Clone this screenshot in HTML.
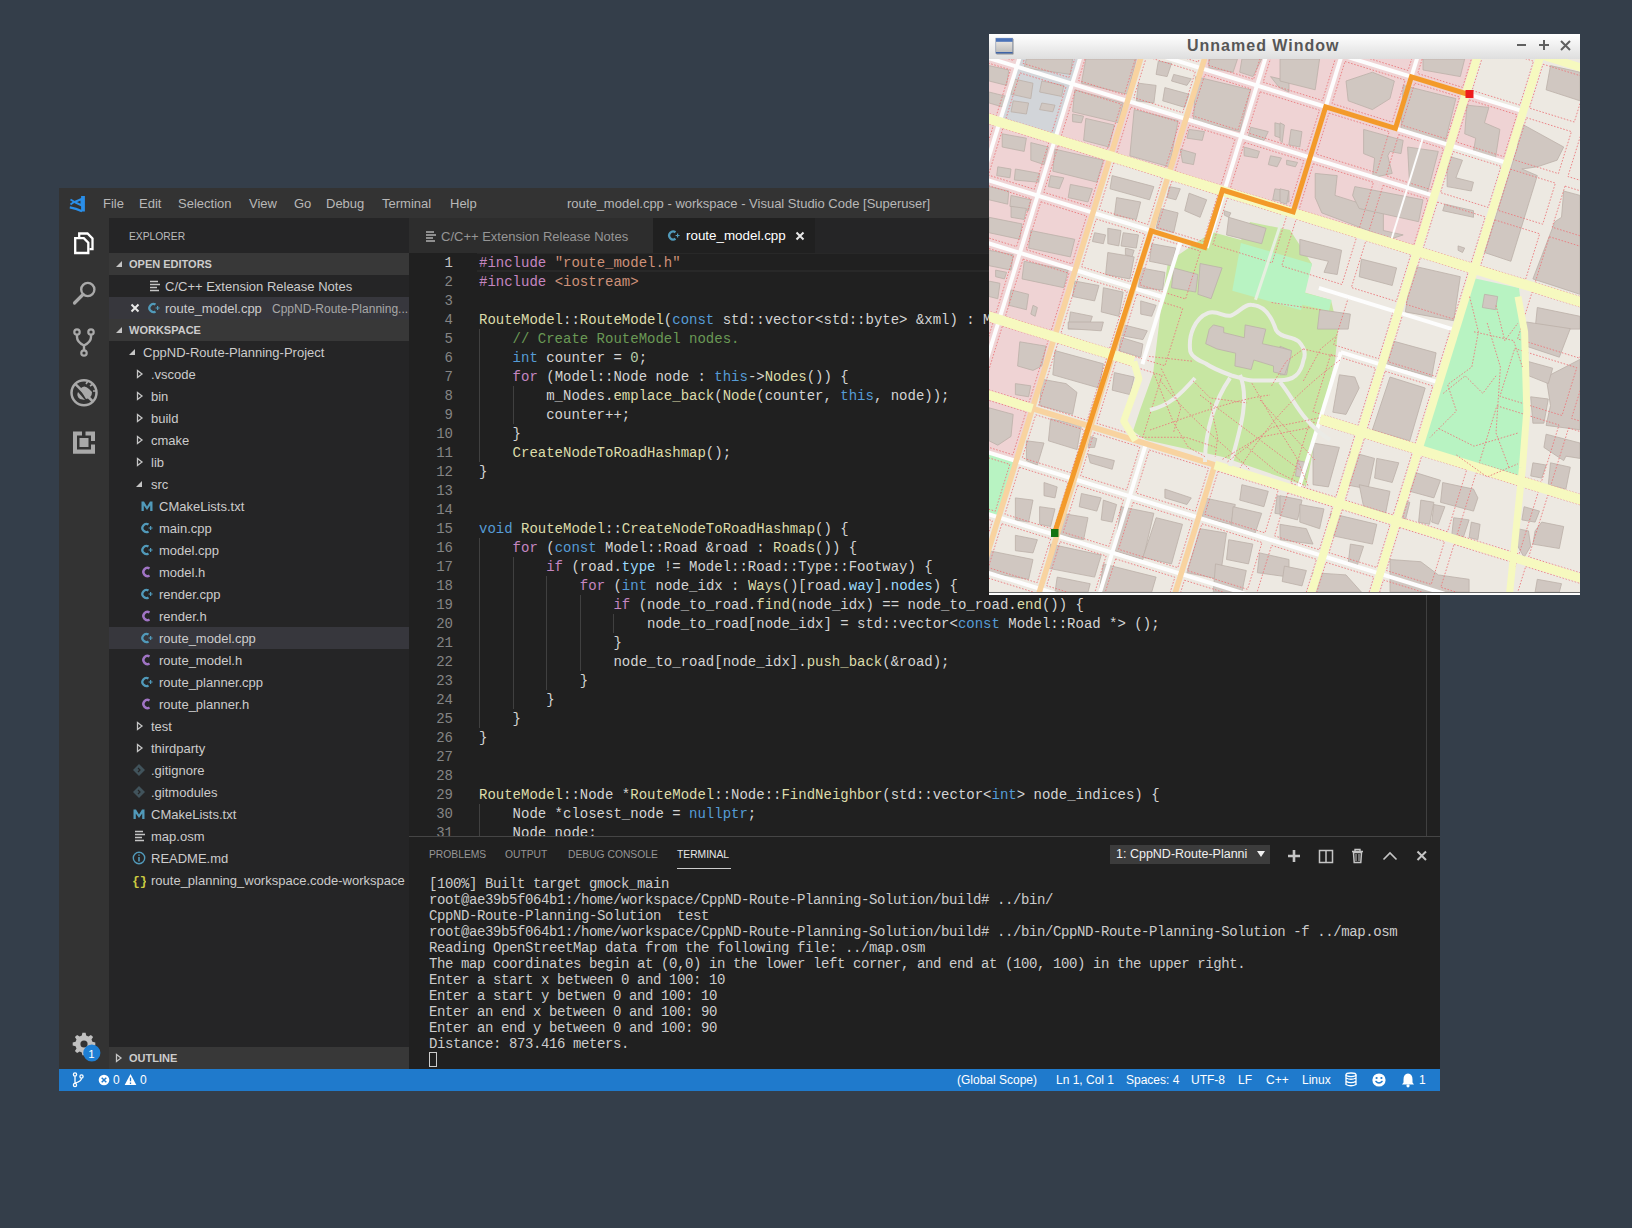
<!DOCTYPE html>
<html><head><meta charset="utf-8">
<style>
*{margin:0;padding:0;box-sizing:border-box}
html,body{width:1632px;height:1228px;overflow:hidden;background:#343e4a;font-family:"Liberation Sans",sans-serif}
.a{position:absolute}
i.ic{font-style:normal;line-height:0}
b{font-weight:normal}
#win{left:59px;top:188px;width:1381px;height:903px;background:#202020;overflow:hidden}
#title{left:0;top:0;width:1381px;height:30px;background:#333333;color:#b8b8b8;font-size:13px}
#title span{position:absolute;top:8px;white-space:pre}
#act{left:0;top:30px;width:50px;height:851px;background:#333333}
#side{left:50px;top:30px;width:300px;height:851px;background:#252526;color:#cccccc;font-size:13px}
.row{position:absolute;left:0;width:300px;height:22px;white-space:pre}
.row span{position:absolute;top:4px}
.hdr{background:#383838;font-weight:bold;font-size:11px;color:#cccccc}
.hdr span{top:5px}
#editor{left:350px;top:30px;width:1031px;height:618px;background:#202020}
#tabs{left:0;top:0;width:1031px;height:35px;background:#252526}
#code{left:0;top:35px;width:1031px;height:583px;overflow:hidden;font-family:"Liberation Mono",monospace;font-size:14px;color:#d4d4d4}
.ln{position:absolute;left:0;width:44px;text-align:right;color:#858585;height:19px;line-height:19px}
.cl{position:absolute;left:70px;height:19px;line-height:19px;white-space:pre}
.g{position:absolute;width:1px;background:#404040}
.k{color:#c586c0}.t{color:#569cd6}.f{color:#dcdcaa}.s{color:#ce9178}.c{color:#6a9955}.m{color:#9cdcfe}.n{color:#b5cea8}
#panel{left:350px;top:648px;width:1031px;height:233px;background:#202020;border-top:1px solid #454545}
#term{left:20px;top:39px;font-family:"Liberation Mono",monospace;font-size:14px;letter-spacing:-0.4px;color:#cccccc;line-height:16px;white-space:pre}
#status{left:0;top:881px;width:1381px;height:22px;background:#1f7acc;color:#ffffff;font-size:12px}
#status span{position:absolute;top:4px;white-space:pre}
#map{left:989px;top:34px;width:591px;height:561px;background:#ede9e2;overflow:hidden}
.ptab{top:12px;font-size:10.3px;color:#969696;white-space:pre}

</style></head><body>
<div id="win" class="a">
  <div id="title" class="a">
    <svg class="a" style="left:0;top:0" width="40" height="30" viewBox="59 188 40 30"><g fill="none" stroke="#2a8ee8"><path d="M83 196 V211.5" stroke-width="3.8"/><path d="M81.5 199 L74.5 202 L81.5 205.5 Z" stroke-width="2"/><path d="M70.5 199.5 L75 202.3 M70.5 204.5 L74 202" stroke-width="1.8"/><path d="M69.8 207.3 Q76 208.3 82 211.3" stroke-width="2.2"/></g></svg>
    <span style="left:44px">File</span>
    <span style="left:80px">Edit</span>
    <span style="left:119px">Selection</span>
    <span style="left:190px">View</span>
    <span style="left:235px">Go</span>
    <span style="left:267px">Debug</span>
    <span style="left:323px">Terminal</span>
    <span style="left:391px">Help</span>
    <span style="left:508px">route_model.cpp - workspace - Visual Studio Code [Superuser]</span>
  </div>
  <div id="act" class="a">
    <svg class="a" style="left:0;top:0" width="50" height="851" viewBox="59 218 50 851">
      <g fill="none" stroke="#ffffff" stroke-width="2.3" stroke-linejoin="miter">
        <path d="M75.2 238.2 H83.8 L88.3 242.7 V253 H75.2 Z"/>
        <path d="M79.2 237 V233.5 H87.5 L92.5 238.5 V249.2 H89.5"/>
      </g>
      <g fill="none" stroke="#a9a9a9">
        <circle cx="87.8" cy="289.5" r="6.6" stroke-width="2.4"/>
        <path d="M83 294.5 L74.5 303" stroke-width="3.2" stroke-linecap="round"/>
        <circle cx="77" cy="332" r="2.7" stroke-width="2.2"/>
        <circle cx="91" cy="332" r="2.7" stroke-width="2.2"/>
        <circle cx="84" cy="353" r="2.7" stroke-width="2.2"/>
        <path d="M77 334.8 V337 Q77 342 84 345.5 Q91 342 91 337 V334.8 M84 345.5 V350.3" stroke-width="2.4"/>
        <circle cx="84" cy="392.7" r="12.5" stroke-width="2.5"/>
        <path d="M75.2 383.9 L92.8 401.5" stroke-width="2.5"/>
      </g>
      <g fill="#a9a9a9">
        <path d="M80 389 Q84 384 89 389 L92 392 Q92 398 86 399 Z"/>
        <path d="M86 384 l2 -3 M90 386 l3 -2 M93 391 h3" stroke="#a9a9a9" stroke-width="1.6"/>
        <path d="M78 392 Q76 396 80 399 L85 400 Z"/>
        <path d="M73 431.5 H82 V435.5 H77 V449.5 H91 V444.5 H95 V453.8 H73 Z"/>
        <path d="M85.5 431.5 H95 V441 H91 V435.5 H85.5 Z"/>
        <rect x="79.5" y="438" width="9" height="9"/>
      </g>
      <g transform="translate(84 1044)">
        <path fill="#c0c0c0" d="M-1.6 -9.5 H1.6 L2.2 -6.6 L4.4 -5.7 L6.9 -7.3 L9.1 -5.1 L7.5 -2.6 L8.4 -0.4 L11.3 0.2 V3.4 L8.4 4 L7.5 6.2 L9.1 8.7 L6.9 10.9 L4.4 9.3 L2.2 10.2 L1.6 13.1 H-1.6 L-2.2 10.2 L-4.4 9.3 L-6.9 10.9 L-9.1 8.7 L-7.5 6.2 L-8.4 4 L-11.3 3.4 V0.2 L-8.4 -0.4 L-7.5 -2.6 L-9.1 -5.1 L-6.9 -7.3 L-4.4 -5.7 L-2.2 -6.6 Z" transform="translate(0 -1.8)"/>
        <circle cx="0" cy="0" r="3.6" fill="#333333"/>
      </g>
      <circle cx="91.8" cy="1053" r="8.6" fill="#1e7fd4"/>
      <text x="91.5" y="1057.5" font-family="Liberation Sans" font-size="11.5" fill="#fff" text-anchor="middle">1</text>
    </svg>
  </div>
  <div id="side" class="a">
<div class="a" style="left:20px;top:13px;font-size:10.3px;color:#bbbbbb">EXPLORER</div>
<div class="row hdr" style="top:35px"><i class="a ic" style="left:6px;top:0"><svg width="8" height="22" viewBox="0 0 8 22"><path d="M7 8 V14 H1 Z" fill="#c5c5c5"/></svg></i><span style="left:20px">OPEN EDITORS</span></div>
<div class="row" style="top:57px;"><i class="a ic" style="left:39px;top:0"><svg width="14" height="22" viewBox="0 0 14 22"><path d="M2 6.5 h8 M2 9.5 h10 M2 12.5 h7 M2 15.5 h9" stroke="#c5c5c5" stroke-width="1.3"/></svg></i><span style="left:56px;color:#cccccc">C/C++ Extension Release Notes</span></div>
<div class="row" style="top:79px;background:#37373d;"><i class="a ic" style="left:38px;top:0"><svg width="14" height="22" viewBox="0 0 14 22"><path d="M8.5 7.6 A4 4 0 1 0 8.5 14.4" fill="none" stroke="#519aba" stroke-width="2.3"/><path d="M8.6 11 h4 M10.6 9 v4" stroke="#519aba" stroke-width="1.2"/></svg></i><span style="left:56px;color:#cccccc">route_model.cpp</span><span style="left:163px;top:5px;font-size:12px;color:#a8a8a8">CppND-Route-Planning...</span><i class="a ic" style="left:21px;top:0"><svg width="10" height="22" viewBox="0 0 10 22"><path d="M1.5 7.5 L8.5 14.5 M8.5 7.5 L1.5 14.5" stroke="#e8e8e8" stroke-width="2"/></svg></i></div>
<div class="row hdr" style="top:101px"><i class="a ic" style="left:6px;top:0"><svg width="8" height="22" viewBox="0 0 8 22"><path d="M7 8 V14 H1 Z" fill="#c5c5c5"/></svg></i><span style="left:20px">WORKSPACE</span></div>
<div class="row" style="top:123px;"><i class="a ic" style="left:19px;top:0"><svg width="8" height="22" viewBox="0 0 8 22"><path d="M7 8 V14 H1 Z" fill="#c5c5c5"/></svg></i><span style="left:34px;color:#cccccc">CppND-Route-Planning-Project</span></div>
<div class="row" style="top:145px;"><i class="a ic" style="left:27px;top:0"><svg width="8" height="22" viewBox="0 0 8 22"><path d="M1.5 7.5 L6 11 L1.5 14.5 Z" fill="none" stroke="#c5c5c5" stroke-width="1.3"/></svg></i><span style="left:42px;color:#cccccc">.vscode</span></div>
<div class="row" style="top:167px;"><i class="a ic" style="left:27px;top:0"><svg width="8" height="22" viewBox="0 0 8 22"><path d="M1.5 7.5 L6 11 L1.5 14.5 Z" fill="none" stroke="#c5c5c5" stroke-width="1.3"/></svg></i><span style="left:42px;color:#cccccc">bin</span></div>
<div class="row" style="top:189px;"><i class="a ic" style="left:27px;top:0"><svg width="8" height="22" viewBox="0 0 8 22"><path d="M1.5 7.5 L6 11 L1.5 14.5 Z" fill="none" stroke="#c5c5c5" stroke-width="1.3"/></svg></i><span style="left:42px;color:#cccccc">build</span></div>
<div class="row" style="top:211px;"><i class="a ic" style="left:27px;top:0"><svg width="8" height="22" viewBox="0 0 8 22"><path d="M1.5 7.5 L6 11 L1.5 14.5 Z" fill="none" stroke="#c5c5c5" stroke-width="1.3"/></svg></i><span style="left:42px;color:#cccccc">cmake</span></div>
<div class="row" style="top:233px;"><i class="a ic" style="left:27px;top:0"><svg width="8" height="22" viewBox="0 0 8 22"><path d="M1.5 7.5 L6 11 L1.5 14.5 Z" fill="none" stroke="#c5c5c5" stroke-width="1.3"/></svg></i><span style="left:42px;color:#cccccc">lib</span></div>
<div class="row" style="top:255px;"><i class="a ic" style="left:26px;top:0"><svg width="8" height="22" viewBox="0 0 8 22"><path d="M7 8 V14 H1 Z" fill="#c5c5c5"/></svg></i><span style="left:42px;color:#cccccc">src</span></div>
<div class="row" style="top:277px;"><i class="a ic" style="left:31px;top:0"><svg width="14" height="22" viewBox="0 0 14 22"><path d="M1.5 16 V6.5 H4 L7 11.5 L10 6.5 H12.5 V16 H10.2 V10.5 L7 15 L3.8 10.5 V16 Z" fill="#519aba"/></svg></i><span style="left:50px;color:#cccccc">CMakeLists.txt</span></div>
<div class="row" style="top:299px;"><i class="a ic" style="left:31px;top:0"><svg width="14" height="22" viewBox="0 0 14 22"><path d="M8.5 7.6 A4 4 0 1 0 8.5 14.4" fill="none" stroke="#519aba" stroke-width="2.3"/><path d="M8.6 11 h4 M10.6 9 v4" stroke="#519aba" stroke-width="1.2"/></svg></i><span style="left:50px;color:#cccccc">main.cpp</span></div>
<div class="row" style="top:321px;"><i class="a ic" style="left:31px;top:0"><svg width="14" height="22" viewBox="0 0 14 22"><path d="M8.5 7.6 A4 4 0 1 0 8.5 14.4" fill="none" stroke="#519aba" stroke-width="2.3"/><path d="M8.6 11 h4 M10.6 9 v4" stroke="#519aba" stroke-width="1.2"/></svg></i><span style="left:50px;color:#cccccc">model.cpp</span></div>
<div class="row" style="top:343px;"><i class="a ic" style="left:31px;top:0"><svg width="14" height="22" viewBox="0 0 14 22"><path d="M9.5 7.6 A4 4 0 1 0 9.5 14.4" fill="none" stroke="#a074c4" stroke-width="2.4"/></svg></i><span style="left:50px;color:#cccccc">model.h</span></div>
<div class="row" style="top:365px;"><i class="a ic" style="left:31px;top:0"><svg width="14" height="22" viewBox="0 0 14 22"><path d="M8.5 7.6 A4 4 0 1 0 8.5 14.4" fill="none" stroke="#519aba" stroke-width="2.3"/><path d="M8.6 11 h4 M10.6 9 v4" stroke="#519aba" stroke-width="1.2"/></svg></i><span style="left:50px;color:#cccccc">render.cpp</span></div>
<div class="row" style="top:387px;"><i class="a ic" style="left:31px;top:0"><svg width="14" height="22" viewBox="0 0 14 22"><path d="M9.5 7.6 A4 4 0 1 0 9.5 14.4" fill="none" stroke="#a074c4" stroke-width="2.4"/></svg></i><span style="left:50px;color:#cccccc">render.h</span></div>
<div class="row" style="top:409px;background:#37373d;"><i class="a ic" style="left:31px;top:0"><svg width="14" height="22" viewBox="0 0 14 22"><path d="M8.5 7.6 A4 4 0 1 0 8.5 14.4" fill="none" stroke="#519aba" stroke-width="2.3"/><path d="M8.6 11 h4 M10.6 9 v4" stroke="#519aba" stroke-width="1.2"/></svg></i><span style="left:50px;color:#cccccc">route_model.cpp</span></div>
<div class="row" style="top:431px;"><i class="a ic" style="left:31px;top:0"><svg width="14" height="22" viewBox="0 0 14 22"><path d="M9.5 7.6 A4 4 0 1 0 9.5 14.4" fill="none" stroke="#a074c4" stroke-width="2.4"/></svg></i><span style="left:50px;color:#cccccc">route_model.h</span></div>
<div class="row" style="top:453px;"><i class="a ic" style="left:31px;top:0"><svg width="14" height="22" viewBox="0 0 14 22"><path d="M8.5 7.6 A4 4 0 1 0 8.5 14.4" fill="none" stroke="#519aba" stroke-width="2.3"/><path d="M8.6 11 h4 M10.6 9 v4" stroke="#519aba" stroke-width="1.2"/></svg></i><span style="left:50px;color:#cccccc">route_planner.cpp</span></div>
<div class="row" style="top:475px;"><i class="a ic" style="left:31px;top:0"><svg width="14" height="22" viewBox="0 0 14 22"><path d="M9.5 7.6 A4 4 0 1 0 9.5 14.4" fill="none" stroke="#a074c4" stroke-width="2.4"/></svg></i><span style="left:50px;color:#cccccc">route_planner.h</span></div>
<div class="row" style="top:497px;"><i class="a ic" style="left:27px;top:0"><svg width="8" height="22" viewBox="0 0 8 22"><path d="M1.5 7.5 L6 11 L1.5 14.5 Z" fill="none" stroke="#c5c5c5" stroke-width="1.3"/></svg></i><span style="left:42px;color:#cccccc">test</span></div>
<div class="row" style="top:519px;"><i class="a ic" style="left:27px;top:0"><svg width="8" height="22" viewBox="0 0 8 22"><path d="M1.5 7.5 L6 11 L1.5 14.5 Z" fill="none" stroke="#c5c5c5" stroke-width="1.3"/></svg></i><span style="left:42px;color:#cccccc">thirdparty</span></div>
<div class="row" style="top:541px;"><i class="a ic" style="left:23px;top:0"><svg width="14" height="22" viewBox="0 0 14 22"><path d="M7 5 L13 11 L7 17 L1 11 Z" fill="#41535b"/><path d="M6 9 L8 11 L6 13" stroke="#252526" stroke-width="1.2" fill="none"/></svg></i><span style="left:42px;color:#cccccc">.gitignore</span></div>
<div class="row" style="top:563px;"><i class="a ic" style="left:23px;top:0"><svg width="14" height="22" viewBox="0 0 14 22"><path d="M7 5 L13 11 L7 17 L1 11 Z" fill="#41535b"/><path d="M6 9 L8 11 L6 13" stroke="#252526" stroke-width="1.2" fill="none"/></svg></i><span style="left:42px;color:#cccccc">.gitmodules</span></div>
<div class="row" style="top:585px;"><i class="a ic" style="left:23px;top:0"><svg width="14" height="22" viewBox="0 0 14 22"><path d="M1.5 16 V6.5 H4 L7 11.5 L10 6.5 H12.5 V16 H10.2 V10.5 L7 15 L3.8 10.5 V16 Z" fill="#519aba"/></svg></i><span style="left:42px;color:#cccccc">CMakeLists.txt</span></div>
<div class="row" style="top:607px;"><i class="a ic" style="left:24px;top:0"><svg width="14" height="22" viewBox="0 0 14 22"><path d="M2 6.5 h8 M2 9.5 h10 M2 12.5 h7 M2 15.5 h9" stroke="#c5c5c5" stroke-width="1.3"/></svg></i><span style="left:42px;color:#cccccc">map.osm</span></div>
<div class="row" style="top:629px;"><i class="a ic" style="left:23px;top:0"><svg width="14" height="22" viewBox="0 0 14 22"><circle cx="7" cy="11" r="5.7" fill="none" stroke="#519aba" stroke-width="1.4"/><path d="M7 10 v4.5 M7 7.5 v1.2" stroke="#519aba" stroke-width="1.6"/></svg></i><span style="left:42px;color:#cccccc">README.md</span></div>
<div class="row" style="top:651px;"><i class="a ic" style="left:23px;top:0"><svg width="14" height="22" viewBox="0 0 14 22"><text x="0" y="16" font-family="Liberation Mono" font-size="13" font-weight="bold" fill="#cbcb41">{}</text></svg></i><span style="left:42px;color:#cccccc">route_planning_workspace.code-workspace</span></div>
<div class="row hdr" style="top:829px"><i class="a ic" style="left:6px;top:0"><svg width="8" height="22" viewBox="0 0 8 22"><path d="M1.5 7.5 L6 11 L1.5 14.5 Z" fill="none" stroke="#c5c5c5" stroke-width="1.3"/></svg></i><span style="left:20px">OUTLINE</span></div>
  </div>
  <div id="editor" class="a">
    <div id="tabs" class="a">
      <div class="a" style="left:0;top:0;width:244px;height:35px;background:#2d2d2d"></div>
      <svg class="a" style="left:15px;top:1px" width="14" height="35" viewBox="0 0 14 35"><path d="M2 13 h8 M2 16 h10 M2 19 h7 M2 22 h9" stroke="#b0b0b0" stroke-width="1.3"/></svg>
      <span class="a" style="left:32px;top:11px;font-size:13px;color:#969696;white-space:pre">C/C++ Extension Release Notes</span>
      <div class="a" style="left:244px;top:0;width:162px;height:35px;background:#202020"></div>
      <svg class="a" style="left:258px;top:0" width="14" height="35" viewBox="0 0 14 35"><path d="M8.5 14.2 A4 4 0 1 0 8.5 20.8" fill="none" stroke="#519aba" stroke-width="2.3"/><path d="M8.6 17.5 h4 M10.6 15.5 v4" stroke="#519aba" stroke-width="1.2"/></svg>
      <span class="a" style="left:277px;top:10px;font-size:13.4px;color:#ffffff;white-space:pre">route_model.cpp</span>
      <svg class="a" style="left:386px;top:13px" width="10" height="10" viewBox="0 0 10 10"><path d="M1.5 1.5 L8.5 8.5 M8.5 1.5 L1.5 8.5" stroke="#e8e8e8" stroke-width="2"/></svg>
    </div>
    <div class="a" style="left:1017px;top:35px;width:1px;height:583px;background:#404040"></div>
    <div id="code" class="a">
<div class="a" style="left:68px;top:0;width:950px;height:19px;border-top:1px solid #282828;border-bottom:2px solid #282828"></div>
<div class="ln" style="top:1px;color:#c6c6c6">1</div>
<div class="cl" style="top:1px"><b class="k">#include</b> <b class="s">"route_model.h"</b></div>
<div class="ln" style="top:20px;color:#858585">2</div>
<div class="cl" style="top:20px"><b class="k">#include</b> <b class="s">&lt;iostream&gt;</b></div>
<div class="ln" style="top:39px;color:#858585">3</div>
<div class="cl" style="top:39px"></div>
<div class="ln" style="top:58px;color:#858585">4</div>
<div class="cl" style="top:58px"><b class="f">RouteModel</b>::<b class="f">RouteModel</b>(<b class="t">const</b> std::vector&lt;std::byte&gt; &amp;xml) : Model(xml) {</div>
<div class="ln" style="top:77px;color:#858585">5</div>
<div class="cl" style="top:77px">    <b class="c">// Create RouteModel nodes.</b></div>
<div class="ln" style="top:96px;color:#858585">6</div>
<div class="cl" style="top:96px">    <b class="t">int</b> counter = <b class="n">0</b>;</div>
<div class="ln" style="top:115px;color:#858585">7</div>
<div class="cl" style="top:115px">    <b class="k">for</b> (Model::Node node : <b class="t">this</b>-&gt;<b class="f">Nodes</b>()) {</div>
<div class="ln" style="top:134px;color:#858585">8</div>
<div class="cl" style="top:134px">        m_Nodes.<b class="f">emplace_back</b>(<b class="f">Node</b>(counter, <b class="t">this</b>, node));</div>
<div class="ln" style="top:153px;color:#858585">9</div>
<div class="cl" style="top:153px">        counter++;</div>
<div class="ln" style="top:172px;color:#858585">10</div>
<div class="cl" style="top:172px">    }</div>
<div class="ln" style="top:191px;color:#858585">11</div>
<div class="cl" style="top:191px">    <b class="f">CreateNodeToRoadHashmap</b>();</div>
<div class="ln" style="top:210px;color:#858585">12</div>
<div class="cl" style="top:210px">}</div>
<div class="ln" style="top:229px;color:#858585">13</div>
<div class="cl" style="top:229px"></div>
<div class="ln" style="top:248px;color:#858585">14</div>
<div class="cl" style="top:248px"></div>
<div class="ln" style="top:267px;color:#858585">15</div>
<div class="cl" style="top:267px"><b class="t">void</b> <b class="f">RouteModel</b>::<b class="f">CreateNodeToRoadHashmap</b>() {</div>
<div class="ln" style="top:286px;color:#858585">16</div>
<div class="cl" style="top:286px">    <b class="k">for</b> (<b class="t">const</b> Model::Road &amp;road : <b class="f">Roads</b>()) {</div>
<div class="ln" style="top:305px;color:#858585">17</div>
<div class="cl" style="top:305px">        <b class="k">if</b> (road.<b class="m">type</b> != Model::Road::Type::Footway) {</div>
<div class="ln" style="top:324px;color:#858585">18</div>
<div class="cl" style="top:324px">            <b class="k">for</b> (<b class="t">int</b> node_idx : <b class="f">Ways</b>()[road.<b class="m">way</b>].<b class="m">nodes</b>) {</div>
<div class="ln" style="top:343px;color:#858585">19</div>
<div class="cl" style="top:343px">                <b class="k">if</b> (node_to_road.<b class="f">find</b>(node_idx) == node_to_road.<b class="f">end</b>()) {</div>
<div class="ln" style="top:362px;color:#858585">20</div>
<div class="cl" style="top:362px">                    node_to_road[node_idx] = std::vector&lt;<b class="t">const</b> Model::Road *&gt; ();</div>
<div class="ln" style="top:381px;color:#858585">21</div>
<div class="cl" style="top:381px">                }</div>
<div class="ln" style="top:400px;color:#858585">22</div>
<div class="cl" style="top:400px">                node_to_road[node_idx].<b class="f">push_back</b>(&amp;road);</div>
<div class="ln" style="top:419px;color:#858585">23</div>
<div class="cl" style="top:419px">            }</div>
<div class="ln" style="top:438px;color:#858585">24</div>
<div class="cl" style="top:438px">        }</div>
<div class="ln" style="top:457px;color:#858585">25</div>
<div class="cl" style="top:457px">    }</div>
<div class="ln" style="top:476px;color:#858585">26</div>
<div class="cl" style="top:476px">}</div>
<div class="ln" style="top:495px;color:#858585">27</div>
<div class="cl" style="top:495px"></div>
<div class="ln" style="top:514px;color:#858585">28</div>
<div class="cl" style="top:514px"></div>
<div class="ln" style="top:533px;color:#858585">29</div>
<div class="cl" style="top:533px"><b class="f">RouteModel</b>::Node *<b class="f">RouteModel</b>::Node::<b class="f">FindNeighbor</b>(std::vector&lt;<b class="t">int</b>&gt; node_indices) {</div>
<div class="ln" style="top:552px;color:#858585">30</div>
<div class="cl" style="top:552px">    Node *closest_node = <b class="t">nullptr</b>;</div>
<div class="ln" style="top:571px;color:#858585">31</div>
<div class="cl" style="top:571px">    Node node;</div>
<div class="g" style="left:70px;top:76px;height:19px"></div>
<div class="g" style="left:70px;top:95px;height:19px"></div>
<div class="g" style="left:70px;top:114px;height:19px"></div>
<div class="g" style="left:70px;top:133px;height:19px"></div>
<div class="g" style="left:104px;top:133px;height:19px"></div>
<div class="g" style="left:70px;top:152px;height:19px"></div>
<div class="g" style="left:104px;top:152px;height:19px"></div>
<div class="g" style="left:70px;top:171px;height:19px"></div>
<div class="g" style="left:70px;top:190px;height:19px"></div>
<div class="g" style="left:70px;top:285px;height:19px"></div>
<div class="g" style="left:70px;top:304px;height:19px"></div>
<div class="g" style="left:104px;top:304px;height:19px"></div>
<div class="g" style="left:70px;top:323px;height:19px"></div>
<div class="g" style="left:104px;top:323px;height:19px"></div>
<div class="g" style="left:137px;top:323px;height:19px"></div>
<div class="g" style="left:70px;top:342px;height:19px"></div>
<div class="g" style="left:104px;top:342px;height:19px"></div>
<div class="g" style="left:137px;top:342px;height:19px"></div>
<div class="g" style="left:171px;top:342px;height:19px"></div>
<div class="g" style="left:70px;top:361px;height:19px"></div>
<div class="g" style="left:104px;top:361px;height:19px"></div>
<div class="g" style="left:137px;top:361px;height:19px"></div>
<div class="g" style="left:171px;top:361px;height:19px"></div>
<div class="g" style="left:204px;top:361px;height:19px"></div>
<div class="g" style="left:70px;top:380px;height:19px"></div>
<div class="g" style="left:104px;top:380px;height:19px"></div>
<div class="g" style="left:137px;top:380px;height:19px"></div>
<div class="g" style="left:171px;top:380px;height:19px"></div>
<div class="g" style="left:70px;top:399px;height:19px"></div>
<div class="g" style="left:104px;top:399px;height:19px"></div>
<div class="g" style="left:137px;top:399px;height:19px"></div>
<div class="g" style="left:171px;top:399px;height:19px"></div>
<div class="g" style="left:70px;top:418px;height:19px"></div>
<div class="g" style="left:104px;top:418px;height:19px"></div>
<div class="g" style="left:137px;top:418px;height:19px"></div>
<div class="g" style="left:70px;top:437px;height:19px"></div>
<div class="g" style="left:104px;top:437px;height:19px"></div>
<div class="g" style="left:70px;top:456px;height:19px"></div>
<div class="g" style="left:70px;top:551px;height:19px"></div>
<div class="g" style="left:70px;top:570px;height:19px"></div>
    </div>
  </div>
  <div id="panel" class="a">
    <span class="a ptab" style="left:20px">PROBLEMS</span>
    <span class="a ptab" style="left:96px">OUTPUT</span>
    <span class="a ptab" style="left:159px">DEBUG CONSOLE</span>
    <span class="a ptab" style="left:268px;color:#e7e7e7">TERMINAL</span>
    <div class="a" style="left:268px;top:31px;width:54px;height:1px;background:#cccccc"></div>
    <div class="a" style="left:701px;top:8px;width:160px;height:19px;background:#3c3c3c"></div>
    <span class="a" style="left:707px;top:10px;font-size:12.5px;color:#f0f0f0;white-space:pre">1: CppND-Route-Planni</span>
    <svg class="a" style="left:847px;top:12px" width="10" height="10" viewBox="0 0 10 10"><path d="M1 2 H9 L5 8 Z" fill="#f0f0f0"/></svg>
    <svg class="a" style="left:0;top:0" width="1031" height="40" viewBox="409 836 1031 40">
      <path d="M1294 849 V861 M1288 855 H1300" stroke="#c5c5c5" stroke-width="2.6"/>
      <rect x="1319.5" y="849.5" width="13" height="12" fill="none" stroke="#c5c5c5" stroke-width="1.5"/>
      <path d="M1326 849.5 V861.5" stroke="#c5c5c5" stroke-width="1.5"/>
      <path d="M1352 850.5 H1363 M1355 850.5 V848.5 H1360 V850.5" fill="none" stroke="#c5c5c5" stroke-width="1.4"/>
      <path d="M1353.5 851.5 H1361.5 L1360.8 861.5 H1354.2 Z" fill="none" stroke="#c5c5c5" stroke-width="1.5"/>
      <path d="M1356 853 V860 M1359 853 V860" stroke="#c5c5c5" stroke-width="1"/>
      <path d="M1383.5 858.5 L1390 852 L1396.5 858.5" fill="none" stroke="#c5c5c5" stroke-width="1.6"/>
      <path d="M1417.5 850.5 L1426 859 M1426 850.5 L1417.5 859" stroke="#c5c5c5" stroke-width="2"/>
    </svg>
    <div id="term" class="a">[100%] Built target gmock_main
root@ae39b5f064b1:/home/workspace/CppND-Route-Planning-Solution/build# ../bin/
CppND-Route-Planning-Solution  test
root@ae39b5f064b1:/home/workspace/CppND-Route-Planning-Solution/build# ../bin/CppND-Route-Planning-Solution -f ../map.osm
Reading OpenStreetMap data from the following file: ../map.osm
The map coordinates begin at (0,0) in the lower left corner, and end at (100, 100) in the upper right.
Enter a start x between 0 and 100: 10
Enter a start y betwen 0 and 100: 10
Enter an end x between 0 and 100: 90
Enter an end y between 0 and 100: 90
Distance: 873.416 meters.
<span style="display:inline-block;width:8px;height:15px;border:1px solid #cccccc;vertical-align:-3px"></span></div>
  </div>
  <div id="status" class="a">
    <svg class="a" style="left:0;top:0" width="1381" height="22" viewBox="59 1069 1381 22">
      <g fill="none" stroke="#fff" stroke-width="1.3">
        <circle cx="75" cy="1074.5" r="1.6"/><circle cx="75" cy="1085" r="1.6"/><circle cx="81.5" cy="1076.5" r="1.6"/>
        <path d="M75 1076.2 V1083.3 M81.5 1078.2 Q81.5 1081 75.5 1083"/>
      </g>
      <circle cx="104" cy="1080" r="5.3" fill="#fff"/>
      <path d="M101.7 1077.7 L106.3 1082.3 M106.3 1077.7 L101.7 1082.3" stroke="#1f7acc" stroke-width="1.5"/>
      <path d="M130.5 1074 L136.3 1085 H124.7 Z" fill="#fff"/>
      <path d="M130.5 1077.5 V1081.3 M130.5 1082.5 V1084" stroke="#1f7acc" stroke-width="1.3"/>
      <g fill="none" stroke="#fff" stroke-width="1.3">
        <ellipse cx="1351" cy="1074.8" rx="5" ry="1.8"/>
        <path d="M1346 1074.8 V1084.5 Q1351 1087 1356 1084.5 V1074.8 M1346 1078 Q1351 1080.5 1356 1078 M1346 1081.3 Q1351 1083.8 1356 1081.3"/>
      </g>
      <circle cx="1379" cy="1080" r="6.6" fill="#fff"/>
      <circle cx="1376.6" cy="1078" r="1.1" fill="#1f7acc"/><circle cx="1381.4" cy="1078" r="1.1" fill="#1f7acc"/>
      <path d="M1375.5 1081 Q1379 1085 1382.5 1081" fill="none" stroke="#1f7acc" stroke-width="1.3"/>
      <path d="M1408 1073.5 Q1403.5 1074 1403.5 1079.5 V1082.5 L1402 1084.5 H1414 L1412.5 1082.5 V1079.5 Q1412.5 1074 1408 1073.5 Z" fill="#fff"/>
      <circle cx="1408" cy="1085.8" r="1.6" fill="#fff"/>
    </svg>
    <span style="left:54px">0</span>
    <span style="left:81px">0</span>
    <span style="left:898px">(Global Scope)</span>
    <span style="left:997px">Ln 1, Col 1</span>
    <span style="left:1067px">Spaces: 4</span>
    <span style="left:1132px">UTF-8</span>
    <span style="left:1179px">LF</span>
    <span style="left:1207px">C++</span>
    <span style="left:1243px">Linux</span>
    <span style="left:1360px">1</span>
  </div>
</div>
<div id="map" class="a">
  <div class="a" style="left:0;top:0;width:591px;height:25px;background:linear-gradient(#ffffff,#f2f2f2 40%,#dedede)"></div>
  <svg class="a" style="left:6px;top:3px" width="19" height="18" viewBox="0 0 19 18"><defs><linearGradient id="wg" x1="0" y1="0" x2="0" y2="1"><stop offset="0" stop-color="#f4f0ea"/><stop offset="1" stop-color="#b8b8b8"/></linearGradient></defs><rect x="0.8" y="1.2" width="17" height="15.3" fill="url(#wg)" stroke="#7a8aa8" stroke-width="0.6"/><rect x="1" y="1.2" width="16.6" height="3.6" fill="#4a72b8"/><rect x="1" y="15" width="16.6" height="1.4" fill="#3e64a8"/><path d="M1.5 17.2 H18.2 V2" fill="none" stroke="#555" stroke-width="0.7" opacity="0.6"/></svg>
  <span class="a" style="left:198px;top:3px;font-size:16px;letter-spacing:1px;font-weight:bold;color:#575757;white-space:pre">Unnamed Window</span>
  <svg class="a" style="left:520px;top:0" width="71" height="25" viewBox="1509 34 71 25"><path d="M1517 45 H1526" stroke="#606060" stroke-width="2"/><path d="M1544 40 V50 M1539 45 H1549" stroke="#606060" stroke-width="2"/><path d="M1561 41 L1570 50 M1570 41 L1561 50" stroke="#606060" stroke-width="2"/></svg>
<svg width="591" height="533" viewBox="989 59 591 533" style="position:absolute;left:0;top:25px">
<rect x="989" y="59" width="591" height="533" fill="#ede9e2"/>
<polygon points="995.8,-173.3 1082.7,-146.4 1065.0,-89.1 978.0,-116.0" fill="#efd3d4"/>
<polygon points="978.0,-116.0 1065.0,-89.1 1048.4,-35.6 961.5,-62.5" fill="#efd3d4"/>
<polygon points="961.5,-62.5 1048.4,-35.6 1032.4,16.0 945.5,-10.9" fill="#efd3d4"/>
<polygon points="945.5,-10.9 1032.4,16.0 1016.8,66.6 929.8,39.7" fill="#efd3d4"/>
<polygon points="929.8,39.7 1016.8,66.6 999.6,122.1 912.7,95.1" fill="#efd3d4"/>
<polygon points="912.7,95.1 999.6,122.1 982.2,178.4 895.2,151.5" fill="#efd3d4"/>
<polygon points="895.2,151.5 982.2,178.4 964.4,235.7 877.5,208.8" fill="#efd3d4"/>
<polygon points="877.5,208.8 964.4,235.7 943.7,302.6 856.8,275.7" fill="#efd3d4"/>
<polygon points="856.8,275.7 943.7,302.6 921.5,374.2 834.6,347.3" fill="#efd3d4"/>
<polygon points="834.6,347.3 921.5,374.2 905.3,426.8 818.4,399.9" fill="#efd3d4"/>
<polygon points="1082.7,-146.4 1138.1,-129.2 1120.4,-71.9 1065.0,-89.1" fill="#efd3d4"/>
<polygon points="1065.0,-89.1 1120.4,-71.9 1103.8,-18.4 1048.4,-35.6" fill="#efd3d4"/>
<polygon points="1048.4,-35.6 1103.8,-18.4 1087.8,33.2 1032.4,16.0" fill="#efd3d4"/>
<polygon points="1032.4,16.0 1087.8,33.2 1072.2,83.8 1016.8,66.6" fill="#d2d5d9"/>
<polygon points="1016.8,66.6 1072.2,83.8 1055.0,139.2 999.6,122.1" fill="#d2d5d9"/>
<polygon points="999.6,122.1 1055.0,139.2 1037.6,195.6 982.2,178.4" fill="#efd3d4"/>
<polygon points="982.2,178.4 1037.6,195.6 1019.8,252.9 964.4,235.7" fill="#efd3d4"/>
<polygon points="964.4,235.7 1019.8,252.9 999.1,319.8 943.7,302.6" fill="#efd3d4"/>
<polygon points="943.7,302.6 999.1,319.8 977.0,391.4 921.5,374.2" fill="#efd3d4"/>
<polygon points="921.5,374.2 977.0,391.4 960.7,443.9 905.3,426.8" fill="#efd3d4"/>
<polygon points="1138.1,-129.2 1193.5,-112.1 1175.8,-54.8 1120.4,-71.9" fill="#efd3d4"/>
<polygon points="1120.4,-71.9 1175.8,-54.8 1159.2,-1.3 1103.8,-18.4" fill="#efd3d4"/>
<polygon points="1103.8,-18.4 1159.2,-1.3 1143.2,50.3 1087.8,33.2" fill="#efd3d4"/>
<polygon points="1087.8,33.2 1143.2,50.3 1127.6,100.9 1072.2,83.8" fill="#efd3d4"/>
<polygon points="1072.2,83.8 1127.6,100.9 1110.4,156.4 1055.0,139.2" fill="#efd3d4"/>
<polygon points="1055.0,139.2 1110.4,156.4 1093.0,212.7 1037.6,195.6" fill="#efd3d4"/>
<polygon points="1037.6,195.6 1093.0,212.7 1075.2,270.0 1019.8,252.9" fill="#efd3d4"/>
<polygon points="1019.8,252.9 1075.2,270.0 1054.5,336.9 999.1,319.8" fill="#efd3d4"/>
<polygon points="999.1,319.8 1054.5,336.9 1032.4,408.5 977.0,391.4" fill="#efd3d4"/>
<polygon points="977.0,391.4 1032.4,408.5 1016.1,461.1 960.7,443.9" fill="#efd3d4"/>
<polygon points="1193.5,-112.1 1251.8,-94.0 1234.0,-36.7 1175.8,-54.8" fill="#ede9e2"/>
<polygon points="1175.8,-54.8 1234.0,-36.7 1217.5,16.8 1159.2,-1.3" fill="#ede9e2"/>
<polygon points="1159.2,-1.3 1217.5,16.8 1201.5,68.4 1143.2,50.3" fill="#ede9e2"/>
<polygon points="1143.2,50.3 1201.5,68.4 1185.8,119.0 1127.6,100.9" fill="#ede9e2"/>
<polygon points="1127.6,100.9 1185.8,119.0 1168.7,174.4 1110.4,156.4" fill="#efd3d4"/>
<polygon points="1251.8,-94.0 1307.2,-76.9 1289.5,-19.6 1234.0,-36.7" fill="#efd3d4"/>
<polygon points="1307.2,-76.9 1376.0,-55.6 1358.2,1.7 1289.5,-19.6" fill="#efd3d4"/>
<polygon points="1376.0,-55.6 1445.7,-34.0 1428.0,23.3 1358.2,1.7" fill="#efd3d4"/>
<polygon points="1234.0,-36.7 1289.5,-19.6 1272.9,33.9 1217.5,16.8" fill="#efd3d4"/>
<polygon points="1289.5,-19.6 1358.2,1.7 1341.7,55.2 1272.9,33.9" fill="#efd3d4"/>
<polygon points="1358.2,1.7 1428.0,23.3 1411.4,76.8 1341.7,55.2" fill="#efd3d4"/>
<polygon points="1217.5,16.8 1272.9,33.9 1256.9,85.5 1201.5,68.4" fill="#efd3d4"/>
<polygon points="1272.9,33.9 1341.7,55.2 1325.7,106.8 1256.9,85.5" fill="#efd3d4"/>
<polygon points="1341.7,55.2 1411.4,76.8 1395.4,128.4 1325.7,106.8" fill="#efd3d4"/>
<polygon points="1201.5,68.4 1256.9,85.5 1241.3,136.1 1185.8,119.0" fill="#efd3d4"/>
<polygon points="1256.9,85.5 1325.7,106.8 1310.0,157.4 1241.3,136.1" fill="#efd3d4"/>
<polygon points="1325.7,106.8 1395.4,128.4 1379.8,179.0 1310.0,157.4" fill="#efd3d4"/>
<polygon points="1185.8,119.0 1241.3,136.1 1224.1,191.5 1168.7,174.4" fill="#efd3d4"/>
<polygon points="1241.3,136.1 1310.0,157.4 1292.9,212.8 1224.1,191.5" fill="#efd3d4"/>
<polygon points="1310.0,157.4 1379.8,179.0 1362.6,234.4 1292.9,212.8" fill="#efd3d4"/>
<polygon points="1428.0,23.3 1482.4,40.2 1465.9,93.7 1411.4,76.8" fill="#efd3d4"/>
<polygon points="1411.4,76.8 1465.9,93.7 1449.9,145.2 1395.4,128.4" fill="#efd3d4"/>
<polygon points="1395.4,128.4 1449.9,145.2 1434.2,195.9 1379.8,179.0" fill="#efd3d4"/>
<polygon points="1379.8,179.0 1434.2,195.9 1417.1,251.3 1362.6,234.4" fill="#efd3d4"/>
<polygon points="1465.9,93.7 1523.2,111.4 1507.2,163.0 1449.9,145.2" fill="#efd3d4"/>
<polygon points="960.7,443.9 1016.1,461.1 998.6,517.4 943.2,500.3" fill="#b8f3c2"/>
<polygon points="905.3,426.8 960.7,443.9 943.2,500.3 887.8,483.1" fill="#b8f3c2"/>
<polygon points="1168.0,262.0 1212.0,232.0 1241.0,240.0 1250.0,222.0 1290.0,230.0 1312.0,264.0 1303.0,292.0 1331.0,300.0 1338.0,330.0 1335.0,361.0 1316.0,437.0 1306.0,486.0 1223.0,457.0 1146.0,440.0 1133.0,431.0 1140.0,410.0 1153.0,374.0 1162.0,300.0" fill="#c7e6a2"/>
<polygon points="1240.9,242.9 1312,263.7 1301,310.3 1232.3,290.7" fill="#b8f3c2"/>
<polygon points="1301,292 1331.5,300 1329,311 1299,304" fill="#b8f3c2"/>
<polygon points="1473.0,278.0 1519.0,288.0 1524.6,331.8 1527.5,411.0 1522.0,480.0 1419.0,452.0" fill="#b8f3c2"/>
<polygon points="1085.8,59.0 1136.3,59.0 1127.6,94.2 1081.4,83.2" fill="#d0c7c1" stroke="#bbb0a8" stroke-width="0.8"/>
<polygon points="1074.8,89.8 1123.2,103.0 1118.8,122.8 1072.6,111.8" fill="#d0c7c1" stroke="#bbb0a8" stroke-width="0.8"/>
<polygon points="1085.8,118.4 1114.4,125.0 1108.9,147.0 1083.6,140.4" fill="#d0c7c1" stroke="#bbb0a8" stroke-width="0.8"/>
<polygon points="1072.6,114.0 1083.6,116.2 1081.4,122.8 1072.6,121.7" fill="#d0c7c1" stroke="#bbb0a8" stroke-width="0.8"/>
<polygon points="1134.2,109.6 1178.1,120.6 1169.3,166.8 1129.8,155.8" fill="#d0c7c1" stroke="#bbb0a8" stroke-width="0.8"/>
<polygon points="1138.5,83.2 1156.1,85.4 1153.9,103.0 1136.3,100.8" fill="#d0c7c1" stroke="#bbb0a8" stroke-width="0.8"/>
<polygon points="1164.9,87.6 1189.1,94.2 1184.7,107.4 1162.7,100.8" fill="#d0c7c1" stroke="#bbb0a8" stroke-width="0.8"/>
<polygon points="1158.3,61.2 1171.5,63.4 1167.1,76.6 1156.1,74.4" fill="#d0c7c1" stroke="#bbb0a8" stroke-width="0.8"/>
<polygon points="1173.7,74.4 1191.3,78.8 1186.9,85.4 1171.5,81.0" fill="#d0c7c1" stroke="#bbb0a8" stroke-width="0.8"/>
<polygon points="1195.7,76.6 1250.7,89.8 1239.7,131.6 1193.5,120.6" fill="#d0c7c1" stroke="#bbb0a8" stroke-width="0.8"/>
<polygon points="1208.9,59.0 1237.5,59.0 1233.1,72.2 1208.9,67.8" fill="#d0c7c1" stroke="#bbb0a8" stroke-width="0.8"/>
<polygon points="1241.9,59.0 1261.7,59.0 1252.9,76.6 1239.7,72.2" fill="#d0c7c1" stroke="#bbb0a8" stroke-width="0.8"/>
<polygon points="1250.7,127.2 1268.3,131.6 1263.9,140.4 1248.5,136.0" fill="#d0c7c1" stroke="#bbb0a8" stroke-width="0.8"/>
<polygon points="1274.9,122.8 1283.7,125.0 1281.5,138.2 1274.9,136.0" fill="#d0c7c1" stroke="#bbb0a8" stroke-width="0.8"/>
<polygon points="1270.5,76.6 1289.0,81.0 1289.0,92.0 1279.3,87.6" fill="#d0c7c1" stroke="#bbb0a8" stroke-width="0.8"/>
<polygon points="1189.1,129.4 1204.5,131.6 1202.3,140.4 1186.9,138.2" fill="#d0c7c1" stroke="#bbb0a8" stroke-width="0.8"/>
<polygon points="1180.3,149.2 1195.7,153.6 1193.5,164.6 1182.5,162.4" fill="#d0c7c1" stroke="#bbb0a8" stroke-width="0.8"/>
<polygon points="1244.1,147.0 1259.5,151.4 1257.3,158.0 1244.1,155.8" fill="#d0c7c1" stroke="#bbb0a8" stroke-width="0.8"/>
<polygon points="1270.5,155.8 1281.5,158.0 1277.1,166.8 1268.3,164.6" fill="#d0c7c1" stroke="#bbb0a8" stroke-width="0.8"/>
<polygon points="1274.9,188.8 1289.0,191.0 1289.0,202.0 1272.7,199.8" fill="#d0c7c1" stroke="#bbb0a8" stroke-width="0.8"/>
<polygon points="1112.2,175.6 1153.9,186.6 1149.5,199.8 1110.0,188.8" fill="#d0c7c1" stroke="#bbb0a8" stroke-width="0.8"/>
<polygon points="1116.6,197.6 1140.7,202.0 1136.3,219.5 1114.4,215.1" fill="#d0c7c1" stroke="#bbb0a8" stroke-width="0.8"/>
<polygon points="1169.3,186.6 1180.3,188.8 1175.9,199.8 1167.1,197.6" fill="#d0c7c1" stroke="#bbb0a8" stroke-width="0.8"/>
<polygon points="1189.1,193.2 1206.7,199.8 1200.1,217.3 1184.7,210.7" fill="#d0c7c1" stroke="#bbb0a8" stroke-width="0.8"/>
<polygon points="1160.5,208.5 1178.1,212.9 1173.7,232.7 1156.1,228.3" fill="#d0c7c1" stroke="#bbb0a8" stroke-width="0.8"/>
<polygon points="1228.7,217.3 1266.1,228.3 1261.7,243.7 1226.5,234.9" fill="#d0c7c1" stroke="#bbb0a8" stroke-width="0.8"/>
<polygon points="1224.3,210.7 1230.9,212.9 1228.7,217.3 1224.3,215.1" fill="#d0c7c1" stroke="#bbb0a8" stroke-width="0.8"/>
<polygon points="1151.7,243.7 1175.9,248.1 1171.5,265.7 1149.5,261.3" fill="#d0c7c1" stroke="#bbb0a8" stroke-width="0.8"/>
<polygon points="1140.7,267.9 1164.9,272.3 1162.7,289.9 1138.5,287.7" fill="#d0c7c1" stroke="#bbb0a8" stroke-width="0.8"/>
<polygon points="1173.7,267.9 1197.9,274.5 1195.7,292.1 1171.5,287.7" fill="#d0c7c1" stroke="#bbb0a8" stroke-width="0.8"/>
<polygon points="1200.1,263.5 1222.1,267.9 1211.1,298.7 1197.9,294.3" fill="#d0c7c1" stroke="#bbb0a8" stroke-width="0.8"/>
<polygon points="1094.6,232.7 1105.6,234.9 1103.4,243.7 1092.4,241.5" fill="#d0c7c1" stroke="#bbb0a8" stroke-width="0.8"/>
<polygon points="1107.8,228.3 1121.0,230.5 1118.8,245.9 1107.8,243.7" fill="#d0c7c1" stroke="#bbb0a8" stroke-width="0.8"/>
<polygon points="1123.2,232.7 1138.5,234.9 1136.3,248.1 1121.0,245.9" fill="#d0c7c1" stroke="#bbb0a8" stroke-width="0.8"/>
<polygon points="1125.4,248.1 1134.2,250.3 1132.0,256.9 1125.4,254.7" fill="#d0c7c1" stroke="#bbb0a8" stroke-width="0.8"/>
<polygon points="1107.8,252.5 1134.2,256.9 1129.8,278.9 1105.6,274.5" fill="#d0c7c1" stroke="#bbb0a8" stroke-width="0.8"/>
<polygon points="1074.8,281.1 1099.0,285.5 1094.6,300.9 1072.6,296.5" fill="#d0c7c1" stroke="#bbb0a8" stroke-width="0.8"/>
<polygon points="1103.4,287.7 1123.2,292.1 1118.8,316.3 1101.2,311.9" fill="#d0c7c1" stroke="#bbb0a8" stroke-width="0.8"/>
<polygon points="1070.4,311.9 1092.4,316.3 1088.0,329.1 1068.2,329.1" fill="#d0c7c1" stroke="#bbb0a8" stroke-width="0.8"/>
<polygon points="1140.7,300.9 1156.1,305.3 1151.7,316.3 1140.7,314.1" fill="#d0c7c1" stroke="#bbb0a8" stroke-width="0.8"/>
<polygon points="1055.0,149.2 1103.4,160.2 1096.8,182.2 1052.8,171.2" fill="#d0c7c1" stroke="#bbb0a8" stroke-width="0.8"/>
<polygon points="1050.6,175.6 1063.8,177.8 1059.4,188.8 1048.4,186.6" fill="#d0c7c1" stroke="#bbb0a8" stroke-width="0.8"/>
<polygon points="1070.4,184.4 1092.4,188.8 1088.0,202.0 1068.2,197.6" fill="#d0c7c1" stroke="#bbb0a8" stroke-width="0.8"/>
<polygon points="1030.8,142.6 1048.4,147.0 1044.0,164.6 1030.8,160.2" fill="#d0c7c1" stroke="#bbb0a8" stroke-width="0.8"/>
<polygon points="1002.2,133.8 1026.4,138.2 1024.2,151.4 1002.2,147.0" fill="#d0c7c1" stroke="#bbb0a8" stroke-width="0.8"/>
<polygon points="997.8,166.8 1011.0,169.0 1009.9,177.8 996.7,175.6" fill="#d0c7c1" stroke="#bbb0a8" stroke-width="0.8"/>
<polygon points="1015.4,169.0 1039.6,173.4 1038.5,182.2 1014.3,180.0" fill="#d0c7c1" stroke="#bbb0a8" stroke-width="0.8"/>
<polygon points="989.0,186.6 1008.8,191.0 1007.7,204.2 989.0,199.8" fill="#d0c7c1" stroke="#bbb0a8" stroke-width="0.8"/>
<polygon points="1011.0,195.4 1030.8,199.8 1028.6,210.7 1009.9,206.3" fill="#d0c7c1" stroke="#bbb0a8" stroke-width="0.8"/>
<polygon points="1011.0,206.3 1026.4,208.5 1024.2,219.5 1011.0,217.3" fill="#d0c7c1" stroke="#bbb0a8" stroke-width="0.8"/>
<polygon points="989.0,217.3 1022.0,223.9 1019.8,239.3 989.0,232.7" fill="#d0c7c1" stroke="#bbb0a8" stroke-width="0.8"/>
<polygon points="1030.8,230.5 1074.8,239.3 1070.4,256.9 1028.6,248.1" fill="#d0c7c1" stroke="#bbb0a8" stroke-width="0.8"/>
<polygon points="989.0,250.3 1013.2,254.7 1011.0,270.1 989.0,265.7" fill="#d0c7c1" stroke="#bbb0a8" stroke-width="0.8"/>
<polygon points="995.6,270.1 1006.6,272.3 1004.4,278.9 995.6,276.7" fill="#d0c7c1" stroke="#bbb0a8" stroke-width="0.8"/>
<polygon points="1024.2,261.3 1068.2,270.1 1063.8,287.7 1022.0,278.9" fill="#d0c7c1" stroke="#bbb0a8" stroke-width="0.8"/>
<polygon points="1011.0,289.9 1028.6,294.3 1026.4,309.7 1008.8,305.3" fill="#d0c7c1" stroke="#bbb0a8" stroke-width="0.8"/>
<polygon points="1033.0,305.3 1037.4,307.5 1035.2,316.3 1030.8,314.1" fill="#d0c7c1" stroke="#bbb0a8" stroke-width="0.8"/>
<polygon points="989.0,281.1 1000.0,283.3 997.8,298.7 989.0,296.5" fill="#d0c7c1" stroke="#bbb0a8" stroke-width="0.8"/>
<polygon points="989.0,65.6 1008.8,70.0 1006.6,85.4 989.0,81.0" fill="#d0c7c1" stroke="#bbb0a8" stroke-width="0.8"/>
<polygon points="989.0,92.0 1006.6,96.4 1004.4,107.4 989.0,103.0" fill="#d0c7c1" stroke="#bbb0a8" stroke-width="0.8"/>
<polygon points="1013.2,78.8 1033.0,83.2 1030.8,98.6 1011.0,94.2" fill="#d0c7c1" stroke="#bbb0a8" stroke-width="0.8"/>
<polygon points="1041.8,81.0 1063.8,85.4 1061.6,96.4 1039.6,92.0" fill="#d0c7c1" stroke="#bbb0a8" stroke-width="0.8"/>
<polygon points="1013.2,100.8 1028.6,103.0 1026.4,114.0 1011.0,111.8" fill="#d0c7c1" stroke="#bbb0a8" stroke-width="0.8"/>
<polygon points="1041.8,103.0 1055.0,105.2 1052.8,111.8 1039.6,109.6" fill="#d0c7c1" stroke="#bbb0a8" stroke-width="0.8"/>
<polygon points="1026.4,59.0 1072.6,59.0 1070.4,74.4 1024.2,67.8" fill="#d0c7c1" stroke="#bbb0a8" stroke-width="0.8"/>
<polygon points="1280.0,59.0 1319.6,59.0 1315.2,89.8 1280.0,81.0" fill="#d0c7c1" stroke="#bbb0a8" stroke-width="0.8"/>
<polygon points="1346.0,81.0 1372.4,72.2 1394.4,81.0 1390.0,98.6 1372.4,109.6 1348.2,100.8" fill="#d0c7c1" stroke="#bbb0a8" stroke-width="0.8"/>
<polygon points="1423.0,59.0 1464.7,59.0 1460.3,76.6 1423.0,70.0" fill="#d0c7c1" stroke="#bbb0a8" stroke-width="0.8"/>
<polygon points="1403.2,85.4 1455.9,98.6 1444.9,142.6 1401.0,129.4" fill="#d0c7c1" stroke="#bbb0a8" stroke-width="0.8"/>
<polygon points="1466.9,105.2 1488.9,107.4 1484.5,122.8 1499.9,129.4 1495.5,158.0 1473.5,151.4 1475.7,138.2 1464.7,133.8" fill="#d0c7c1" stroke="#bbb0a8" stroke-width="0.8"/>
<polygon points="1363.6,129.4 1403.2,140.4 1401.0,153.6 1390.0,151.4 1387.8,155.8 1392.2,173.4 1372.4,177.8 1374.6,158.0 1363.6,153.6" fill="#d0c7c1" stroke="#bbb0a8" stroke-width="0.8"/>
<polygon points="1407.6,147.0 1438.3,151.4 1427.3,193.2 1409.8,188.8" fill="#d0c7c1" stroke="#bbb0a8" stroke-width="0.8"/>
<polygon points="1315.2,173.4 1337.2,175.6 1335.0,195.4 1383.4,210.7 1383.4,230.5 1403.2,234.9 1390.0,239.3 1368.0,230.5 1339.4,219.5 1321.8,212.9 1315.2,197.6" fill="#d0c7c1" stroke="#bbb0a8" stroke-width="0.8"/>
<polygon points="1354.8,186.6 1423.0,199.8 1418.6,221.7 1359.2,208.5 1352.6,195.4" fill="#d0c7c1" stroke="#bbb0a8" stroke-width="0.8"/>
<polygon points="1291.0,129.4 1302.0,131.6 1299.8,147.0 1288.8,144.8" fill="#d0c7c1" stroke="#bbb0a8" stroke-width="0.8"/>
<polygon points="1280.0,122.8 1284.4,125.0 1282.2,142.6 1280.0,140.4" fill="#d0c7c1" stroke="#bbb0a8" stroke-width="0.8"/>
<polygon points="1286.6,160.2 1297.6,162.4 1295.4,166.8 1286.6,164.6" fill="#d0c7c1" stroke="#bbb0a8" stroke-width="0.8"/>
<polygon points="1280.0,188.8 1288.8,191.0 1286.6,204.2 1280.0,202.0" fill="#d0c7c1" stroke="#bbb0a8" stroke-width="0.8"/>
<polygon points="1447.1,155.8 1462.5,160.2 1455.9,177.8 1473.5,182.2 1471.3,191.0 1447.1,186.6" fill="#d0c7c1" stroke="#bbb0a8" stroke-width="0.8"/>
<polygon points="1444.9,204.2 1473.5,210.7 1473.5,217.3 1442.7,210.7" fill="#d0c7c1" stroke="#bbb0a8" stroke-width="0.8"/>
<polygon points="1519.7,122.8 1563.7,147.0 1557.1,160.2 1537.3,166.8 1521.9,169.0 1537.3,175.6 1510.9,261.3 1484.5,252.5 1517.5,147.0" fill="#d0c7c1" stroke="#bbb0a8" stroke-width="0.8"/>
<polygon points="1563.7,191.0 1580.0,195.4 1580.0,294.3 1532.9,278.9 1554.9,221.7 1561.5,217.3" fill="#d0c7c1" stroke="#bbb0a8" stroke-width="0.8"/>
<polygon points="1550.5,65.6 1580.0,72.2 1580.0,100.8 1546.1,89.8" fill="#d0c7c1" stroke="#bbb0a8" stroke-width="0.8"/>
<polygon points="1458.1,245.9 1464.7,248.1 1462.5,252.5 1458.1,250.3" fill="#d0c7c1" stroke="#bbb0a8" stroke-width="0.8"/>
<polygon points="1299.8,239.3 1341.6,250.3 1337.2,274.5 1324.0,272.3 1328.4,261.3 1299.8,254.7" fill="#d0c7c1" stroke="#bbb0a8" stroke-width="0.8"/>
<polygon points="1361.4,259.1 1396.6,267.9 1392.2,285.5 1359.2,276.7" fill="#d0c7c1" stroke="#bbb0a8" stroke-width="0.8"/>
<polygon points="1412.0,265.7 1460.3,276.7 1453.7,320.7 1405.4,311.9" fill="#d0c7c1" stroke="#bbb0a8" stroke-width="0.8"/>
<polygon points="1319.6,309.7 1350.4,314.1 1348.2,329.1 1317.4,329.1" fill="#d0c7c1" stroke="#bbb0a8" stroke-width="0.8"/>
<polygon points="1484.5,294.3 1497.7,296.5 1495.5,309.7 1482.3,307.5" fill="#d0c7c1" stroke="#bbb0a8" stroke-width="0.8"/>
<polygon points="1537.3,307.5 1580.0,316.3 1580.0,329.1 1535.1,329.1" fill="#d0c7c1" stroke="#bbb0a8" stroke-width="0.8"/>
<polygon points="1055.0,350.6 1103.4,363.8 1099.0,388.0 1052.8,374.8" fill="#d0c7c1" stroke="#bbb0a8" stroke-width="0.8"/>
<polygon points="1041.8,379.2 1066.0,383.6 1077.0,392.4 1072.6,414.4 1039.6,405.6" fill="#d0c7c1" stroke="#bbb0a8" stroke-width="0.8"/>
<polygon points="1121.0,324.2 1147.3,330.8 1142.9,339.6 1118.8,335.2" fill="#d0c7c1" stroke="#bbb0a8" stroke-width="0.8"/>
<polygon points="1121.0,337.4 1142.9,344.0 1140.7,357.2 1118.8,350.6" fill="#d0c7c1" stroke="#bbb0a8" stroke-width="0.8"/>
<polygon points="1114.4,372.6 1134.2,377.0 1129.8,394.6 1112.2,390.2" fill="#d0c7c1" stroke="#bbb0a8" stroke-width="0.8"/>
<polygon points="1050.6,418.8 1081.4,425.4 1077.0,449.6 1048.4,440.8" fill="#d0c7c1" stroke="#bbb0a8" stroke-width="0.8"/>
<polygon points="1026.4,440.8 1044.0,443.0 1037.4,465.0 1026.4,460.6" fill="#d0c7c1" stroke="#bbb0a8" stroke-width="0.8"/>
<polygon points="1088.0,454.0 1114.4,460.6 1112.2,469.3 1090.2,462.8" fill="#d0c7c1" stroke="#bbb0a8" stroke-width="0.8"/>
<polygon points="1044.0,482.5 1057.2,486.9 1055.0,497.9 1044.0,495.7" fill="#d0c7c1" stroke="#bbb0a8" stroke-width="0.8"/>
<polygon points="1015.4,497.9 1033.0,500.1 1028.6,522.1 1015.4,519.9" fill="#d0c7c1" stroke="#bbb0a8" stroke-width="0.8"/>
<polygon points="1039.6,506.7 1055.0,508.9 1050.6,526.5 1039.6,524.3" fill="#d0c7c1" stroke="#bbb0a8" stroke-width="0.8"/>
<polygon points="1081.4,493.5 1101.2,497.9 1096.8,511.1 1079.2,506.7" fill="#d0c7c1" stroke="#bbb0a8" stroke-width="0.8"/>
<polygon points="1103.4,500.1 1116.6,504.5 1112.2,522.1 1101.2,519.9" fill="#d0c7c1" stroke="#bbb0a8" stroke-width="0.8"/>
<polygon points="1061.6,513.3 1088.0,517.7 1083.6,539.7 1059.4,535.3" fill="#d0c7c1" stroke="#bbb0a8" stroke-width="0.8"/>
<polygon points="1121.0,506.7 1153.9,513.3 1142.9,559.5 1114.4,550.7" fill="#d0c7c1" stroke="#bbb0a8" stroke-width="0.8"/>
<polygon points="1156.1,517.7 1182.5,524.3 1171.5,563.9 1142.9,557.3" fill="#d0c7c1" stroke="#bbb0a8" stroke-width="0.8"/>
<polygon points="989.0,550.7 1033.0,559.5 1028.6,579.3 989.0,572.7" fill="#d0c7c1" stroke="#bbb0a8" stroke-width="0.8"/>
<polygon points="1050.6,544.1 1101.2,555.1 1094.6,577.1 1048.4,568.3" fill="#d0c7c1" stroke="#bbb0a8" stroke-width="0.8"/>
<polygon points="1103.4,563.9 1156.1,577.1 1151.7,592.1 1099.0,592.1" fill="#d0c7c1" stroke="#bbb0a8" stroke-width="0.8"/>
<polygon points="1057.2,577.1 1090.2,583.7 1088.0,592.1 1055.0,592.1" fill="#d0c7c1" stroke="#bbb0a8" stroke-width="0.8"/>
<polygon points="1015.4,535.3 1037.4,539.7 1033.0,552.9 1015.4,550.7" fill="#d0c7c1" stroke="#bbb0a8" stroke-width="0.8"/>
<polygon points="1200.1,528.7 1226.5,533.1 1219.9,579.3 1186.9,572.7" fill="#d0c7c1" stroke="#bbb0a8" stroke-width="0.8"/>
<polygon points="1204.5,497.9 1235.3,504.5 1230.9,524.3 1202.3,517.7" fill="#d0c7c1" stroke="#bbb0a8" stroke-width="0.8"/>
<polygon points="1233.1,506.7 1261.7,513.3 1255.1,533.1 1230.9,528.7" fill="#d0c7c1" stroke="#bbb0a8" stroke-width="0.8"/>
<polygon points="1241.9,484.7 1268.3,491.3 1263.9,506.7 1239.7,500.1" fill="#d0c7c1" stroke="#bbb0a8" stroke-width="0.8"/>
<polygon points="1228.7,539.7 1252.9,544.1 1248.5,563.9 1226.5,559.5" fill="#d0c7c1" stroke="#bbb0a8" stroke-width="0.8"/>
<polygon points="1215.5,563.9 1246.3,570.5 1241.9,592.1 1213.3,592.1" fill="#d0c7c1" stroke="#bbb0a8" stroke-width="0.8"/>
<polygon points="1277.1,495.7 1289.0,497.9 1289.0,515.5 1274.9,513.3" fill="#d0c7c1" stroke="#bbb0a8" stroke-width="0.8"/>
<polygon points="1259.5,552.9 1289.0,559.5 1289.0,577.1 1257.3,572.7" fill="#d0c7c1" stroke="#bbb0a8" stroke-width="0.8"/>
<polygon points="1164.9,489.1 1191.3,497.9 1186.9,504.5 1164.9,497.9" fill="#d0c7c1" stroke="#bbb0a8" stroke-width="0.8"/>
<polygon points="1019.8,341.8 1046.2,346.2 1041.8,366.0 1033.0,370.4 1017.6,366.0" fill="#d0c7c1" stroke="#bbb0a8" stroke-width="0.8"/>
<polygon points="1015.4,383.6 1030.8,385.8 1028.6,396.8 1015.4,394.6" fill="#d0c7c1" stroke="#bbb0a8" stroke-width="0.8"/>
<polygon points="989.0,407.8 1013.2,414.4 1011.0,436.4 997.8,445.2 989.0,440.8" fill="#d0c7c1" stroke="#bbb0a8" stroke-width="0.8"/>
<polygon points="1090.2,436.4 1096.8,438.6 1094.6,447.4 1088.0,447.4" fill="#d0c7c1" stroke="#bbb0a8" stroke-width="0.8"/>
<polygon points="1068.2,322.0 1103.4,322.0 1101.2,330.8 1068.2,328.6" fill="#d0c7c1" stroke="#bbb0a8" stroke-width="0.8"/>
<polygon points="1387.8,339.6 1436.1,352.8 1431.7,377.0 1385.6,363.8" fill="#d0c7c1" stroke="#bbb0a8" stroke-width="0.8"/>
<polygon points="1390.0,377.0 1425.2,388.0 1409.8,440.8 1372.4,429.8" fill="#d0c7c1" stroke="#bbb0a8" stroke-width="0.8"/>
<polygon points="1339.4,374.8 1354.8,377.0 1359.2,388.0 1346.0,414.4 1332.8,412.2" fill="#d0c7c1" stroke="#bbb0a8" stroke-width="0.8"/>
<polygon points="1313.0,443.0 1339.4,447.4 1328.4,486.9 1313.0,484.7" fill="#d0c7c1" stroke="#bbb0a8" stroke-width="0.8"/>
<polygon points="1297.6,460.6 1308.6,462.8 1304.2,478.1 1295.4,475.9" fill="#d0c7c1" stroke="#bbb0a8" stroke-width="0.8"/>
<polygon points="1350.4,451.8 1374.6,458.4 1368.0,489.1 1346.0,484.7" fill="#d0c7c1" stroke="#bbb0a8" stroke-width="0.8"/>
<polygon points="1376.8,458.4 1398.8,462.8 1392.2,482.5 1374.6,478.1" fill="#d0c7c1" stroke="#bbb0a8" stroke-width="0.8"/>
<polygon points="1412.0,471.5 1440.5,480.3 1433.9,497.9 1409.8,491.3" fill="#d0c7c1" stroke="#bbb0a8" stroke-width="0.8"/>
<polygon points="1442.7,482.5 1473.5,489.1 1477.9,497.9 1473.5,511.1 1440.5,502.3" fill="#d0c7c1" stroke="#bbb0a8" stroke-width="0.8"/>
<polygon points="1359.2,484.7 1390.0,491.3 1385.6,513.3 1363.6,506.7" fill="#d0c7c1" stroke="#bbb0a8" stroke-width="0.8"/>
<polygon points="1280.0,495.7 1302.0,500.1 1297.6,519.9 1280.0,515.5" fill="#d0c7c1" stroke="#bbb0a8" stroke-width="0.8"/>
<polygon points="1299.8,504.5 1324.0,508.9 1319.6,528.7 1299.8,522.1" fill="#d0c7c1" stroke="#bbb0a8" stroke-width="0.8"/>
<polygon points="1330.6,513.3 1376.8,524.3 1372.4,544.1 1330.6,535.3" fill="#d0c7c1" stroke="#bbb0a8" stroke-width="0.8"/>
<polygon points="1280.0,524.3 1306.4,528.7 1313.0,544.1 1280.0,539.7" fill="#d0c7c1" stroke="#bbb0a8" stroke-width="0.8"/>
<polygon points="1398.8,500.1 1409.8,502.3 1405.4,519.9 1398.8,517.7" fill="#d0c7c1" stroke="#bbb0a8" stroke-width="0.8"/>
<polygon points="1420.8,500.1 1433.9,502.3 1429.5,524.3 1418.6,522.1" fill="#d0c7c1" stroke="#bbb0a8" stroke-width="0.8"/>
<polygon points="1433.9,504.5 1444.9,506.7 1438.3,524.3 1431.7,522.1" fill="#d0c7c1" stroke="#bbb0a8" stroke-width="0.8"/>
<polygon points="1453.7,517.7 1469.1,519.9 1462.5,539.7 1451.5,537.5" fill="#d0c7c1" stroke="#bbb0a8" stroke-width="0.8"/>
<polygon points="1471.3,522.1 1480.1,524.3 1477.9,539.7 1469.1,537.5" fill="#d0c7c1" stroke="#bbb0a8" stroke-width="0.8"/>
<polygon points="1350.4,544.1 1363.6,546.3 1357.0,566.1 1348.2,563.9" fill="#d0c7c1" stroke="#bbb0a8" stroke-width="0.8"/>
<polygon points="1390.0,559.5 1420.8,561.7 1438.3,574.9 1469.1,579.3 1469.1,592.1 1390.0,592.1" fill="#d0c7c1" stroke="#bbb0a8" stroke-width="0.8"/>
<polygon points="1524.1,506.7 1539.5,511.1 1535.1,522.1 1521.9,519.9" fill="#d0c7c1" stroke="#bbb0a8" stroke-width="0.8"/>
<polygon points="1541.7,522.1 1563.7,526.5 1559.3,548.5 1532.9,544.1 1535.1,530.9" fill="#d0c7c1" stroke="#bbb0a8" stroke-width="0.8"/>
<polygon points="1517.5,528.7 1528.5,530.9 1530.7,546.3 1524.1,557.3 1515.3,541.9" fill="#d0c7c1" stroke="#bbb0a8" stroke-width="0.8"/>
<polygon points="1532.9,462.8 1546.1,465.0 1541.7,478.1 1530.7,475.9" fill="#d0c7c1" stroke="#bbb0a8" stroke-width="0.8"/>
<polygon points="1550.5,462.8 1570.3,467.2 1565.9,489.1 1548.3,484.7" fill="#d0c7c1" stroke="#bbb0a8" stroke-width="0.8"/>
<polygon points="1546.1,434.2 1580.0,443.0 1580.0,458.4 1565.9,456.2 1563.7,460.6 1543.9,447.4" fill="#d0c7c1" stroke="#bbb0a8" stroke-width="0.8"/>
<polygon points="1530.7,396.8 1548.3,399.0 1543.9,423.2 1532.9,423.2" fill="#d0c7c1" stroke="#bbb0a8" stroke-width="0.8"/>
<polygon points="1546.1,377.0 1580.0,359.4 1580.0,429.8 1546.1,425.4 1550.5,405.6" fill="#d0c7c1" stroke="#bbb0a8" stroke-width="0.8"/>
<polygon points="1526.3,322.0 1570.3,328.6 1559.3,357.2 1526.3,346.2" fill="#d0c7c1" stroke="#bbb0a8" stroke-width="0.8"/>
<polygon points="1528.5,361.6 1552.7,368.2 1548.3,383.6 1526.3,374.8" fill="#d0c7c1" stroke="#bbb0a8" stroke-width="0.8"/>
<polygon points="1280.0,346.2 1291.0,350.6 1286.6,374.8 1280.0,374.8" fill="#d0c7c1" stroke="#bbb0a8" stroke-width="0.8"/>
<polygon points="1537.3,579.3 1561.5,583.7 1559.3,592.1 1535.1,592.1" fill="#d0c7c1" stroke="#bbb0a8" stroke-width="0.8"/>
<polygon points="1284.4,566.1 1306.4,570.5 1302.0,585.9 1282.2,581.5" fill="#d0c7c1" stroke="#bbb0a8" stroke-width="0.8"/>
<polygon points="1313.0,572.7 1346.0,574.9 1361.4,592.1 1313.0,592.1" fill="#d0c7c1" stroke="#bbb0a8" stroke-width="0.8"/>
<polygon points="1213.4,324.9 1223.7,327.4 1223.7,332.6 1244.3,337.7 1245.2,324.9 1265.8,329.2 1262.3,343.7 1282,348 1291.5,350.6 1290.6,358.3 1284.6,374.6 1273.5,372 1273.5,366 1253.8,360 1251.2,369.5 1234.9,366 1235.7,353.2 1216.9,348.9 1205.7,343.7 1209.2,329.2" fill="#d0c7c1" stroke="#bbb0a8" stroke-width="0.8"/>
<polygon points="999.1,-167.0 1076.5,-143.1 1061.7,-95.3 984.3,-119.3" fill="none" stroke="#ea7a7e" stroke-width="0.9" stroke-dasharray="1.6 1.6"/>
<polygon points="981.3,-109.7 1058.7,-85.8 1045.1,-41.8 967.7,-65.8" fill="none" stroke="#ea7a7e" stroke-width="0.9" stroke-dasharray="1.6 1.6"/>
<polygon points="964.8,-56.2 1042.1,-32.3 1029.1,9.8 951.8,-14.2" fill="none" stroke="#ea7a7e" stroke-width="0.9" stroke-dasharray="1.6 1.6"/>
<polygon points="948.8,-4.6 1026.2,19.3 1013.5,60.4 936.1,36.4" fill="none" stroke="#ea7a7e" stroke-width="0.9" stroke-dasharray="1.6 1.6"/>
<polygon points="933.1,46.0 1010.5,69.9 996.3,115.8 918.9,91.8" fill="none" stroke="#ea7a7e" stroke-width="0.9" stroke-dasharray="1.6 1.6"/>
<polygon points="916.0,101.4 993.4,125.3 978.9,172.2 901.5,148.2" fill="none" stroke="#ea7a7e" stroke-width="0.9" stroke-dasharray="1.6 1.6"/>
<polygon points="898.5,157.8 975.9,181.7 961.1,229.5 883.7,205.5" fill="none" stroke="#ea7a7e" stroke-width="0.9" stroke-dasharray="1.6 1.6"/>
<polygon points="880.8,215.1 958.2,239.0 940.4,296.3 863.0,272.4" fill="none" stroke="#ea7a7e" stroke-width="0.9" stroke-dasharray="1.6 1.6"/>
<polygon points="860.1,281.9 937.5,305.9 918.2,368.0 840.9,344.0" fill="none" stroke="#ea7a7e" stroke-width="0.9" stroke-dasharray="1.6 1.6"/>
<polygon points="837.9,353.6 915.3,377.5 902.0,420.5 824.6,396.6" fill="none" stroke="#ea7a7e" stroke-width="0.9" stroke-dasharray="1.6 1.6"/>
<polygon points="821.6,406.1 899.0,430.1 884.5,476.9 807.2,452.9" fill="none" stroke="#ea7a7e" stroke-width="0.9" stroke-dasharray="1.6 1.6"/>
<polygon points="804.2,462.5 881.6,486.4 868.0,530.4 790.6,506.4" fill="none" stroke="#ea7a7e" stroke-width="0.9" stroke-dasharray="1.6 1.6"/>
<polygon points="787.6,516.0 865.0,539.9 848.8,592.5 771.4,568.5" fill="none" stroke="#ea7a7e" stroke-width="0.9" stroke-dasharray="1.6 1.6"/>
<polygon points="1086.0,-140.1 1131.9,-125.9 1117.1,-78.2 1071.2,-92.4" fill="none" stroke="#ea7a7e" stroke-width="0.9" stroke-dasharray="1.6 1.6"/>
<polygon points="1068.3,-82.8 1114.1,-68.6 1100.5,-24.7 1054.7,-38.9" fill="none" stroke="#ea7a7e" stroke-width="0.9" stroke-dasharray="1.6 1.6"/>
<polygon points="1051.7,-29.3 1097.6,-15.1 1084.5,26.9 1038.7,12.7" fill="none" stroke="#ea7a7e" stroke-width="0.9" stroke-dasharray="1.6 1.6"/>
<polygon points="1035.7,22.3 1081.6,36.5 1068.9,77.5 1023.0,63.3" fill="none" stroke="#ea7a7e" stroke-width="0.9" stroke-dasharray="1.6 1.6"/>
<polygon points="1020.1,72.9 1065.9,87.1 1051.7,132.9 1005.9,118.8" fill="none" stroke="#ea7a7e" stroke-width="0.9" stroke-dasharray="1.6 1.6"/>
<polygon points="1002.9,128.3 1048.8,142.5 1034.3,189.3 988.4,175.1" fill="none" stroke="#ea7a7e" stroke-width="0.9" stroke-dasharray="1.6 1.6"/>
<polygon points="985.5,184.7 1031.3,198.9 1016.5,246.6 970.7,232.4" fill="none" stroke="#ea7a7e" stroke-width="0.9" stroke-dasharray="1.6 1.6"/>
<polygon points="967.7,242.0 1013.6,256.2 995.8,313.5 950.0,299.3" fill="none" stroke="#ea7a7e" stroke-width="0.9" stroke-dasharray="1.6 1.6"/>
<polygon points="947.0,308.9 992.9,323.0 973.7,385.1 927.8,370.9" fill="none" stroke="#ea7a7e" stroke-width="0.9" stroke-dasharray="1.6 1.6"/>
<polygon points="924.8,380.5 970.7,394.7 957.4,437.7 911.5,423.5" fill="none" stroke="#ea7a7e" stroke-width="0.9" stroke-dasharray="1.6 1.6"/>
<polygon points="908.6,433.0 954.4,447.2 939.9,494.0 894.1,479.8" fill="none" stroke="#ea7a7e" stroke-width="0.9" stroke-dasharray="1.6 1.6"/>
<polygon points="891.1,489.4 937.0,503.6 923.4,547.5 877.5,533.3" fill="none" stroke="#ea7a7e" stroke-width="0.9" stroke-dasharray="1.6 1.6"/>
<polygon points="874.6,542.9 920.4,557.1 904.2,609.6 858.3,595.4" fill="none" stroke="#ea7a7e" stroke-width="0.9" stroke-dasharray="1.6 1.6"/>
<polygon points="1141.4,-123.0 1187.3,-108.8 1172.5,-61.0 1126.6,-75.2" fill="none" stroke="#ea7a7e" stroke-width="0.9" stroke-dasharray="1.6 1.6"/>
<polygon points="1123.7,-65.7 1169.5,-51.5 1155.9,-7.5 1110.1,-21.7" fill="none" stroke="#ea7a7e" stroke-width="0.9" stroke-dasharray="1.6 1.6"/>
<polygon points="1107.1,-12.2 1153.0,2.0 1140.0,44.1 1094.1,29.9" fill="none" stroke="#ea7a7e" stroke-width="0.9" stroke-dasharray="1.6 1.6"/>
<polygon points="1091.1,39.4 1137.0,53.6 1124.3,94.7 1078.4,80.5" fill="none" stroke="#ea7a7e" stroke-width="0.9" stroke-dasharray="1.6 1.6"/>
<polygon points="1075.5,90.1 1121.3,104.2 1107.1,150.1 1061.3,135.9" fill="none" stroke="#ea7a7e" stroke-width="0.9" stroke-dasharray="1.6 1.6"/>
<polygon points="1058.3,145.5 1104.2,159.7 1089.7,206.5 1043.8,192.3" fill="none" stroke="#ea7a7e" stroke-width="0.9" stroke-dasharray="1.6 1.6"/>
<polygon points="1040.9,201.8 1086.7,216.0 1071.9,263.8 1026.1,249.6" fill="none" stroke="#ea7a7e" stroke-width="0.9" stroke-dasharray="1.6 1.6"/>
<polygon points="1023.1,259.1 1069.0,273.3 1051.2,330.6 1005.4,316.5" fill="none" stroke="#ea7a7e" stroke-width="0.9" stroke-dasharray="1.6 1.6"/>
<polygon points="1002.4,326.0 1048.3,340.2 1029.1,402.3 983.2,388.1" fill="none" stroke="#ea7a7e" stroke-width="0.9" stroke-dasharray="1.6 1.6"/>
<polygon points="980.2,397.7 1026.1,411.8 1012.8,454.8 966.9,440.6" fill="none" stroke="#ea7a7e" stroke-width="0.9" stroke-dasharray="1.6 1.6"/>
<polygon points="964.0,450.2 1009.8,464.4 995.3,511.2 949.5,497.0" fill="none" stroke="#ea7a7e" stroke-width="0.9" stroke-dasharray="1.6 1.6"/>
<polygon points="946.5,506.6 992.4,520.7 978.8,564.7 932.9,550.5" fill="none" stroke="#ea7a7e" stroke-width="0.9" stroke-dasharray="1.6 1.6"/>
<polygon points="930.0,560.0 975.8,574.2 959.6,626.8 913.7,612.6" fill="none" stroke="#ea7a7e" stroke-width="0.9" stroke-dasharray="1.6 1.6"/>
<polygon points="1196.8,-105.8 1245.5,-90.7 1230.8,-43.0 1182.0,-58.1" fill="none" stroke="#ea7a7e" stroke-width="0.9" stroke-dasharray="1.6 1.6"/>
<polygon points="1179.1,-48.5 1227.8,-33.4 1214.2,10.5 1165.5,-4.6" fill="none" stroke="#ea7a7e" stroke-width="0.9" stroke-dasharray="1.6 1.6"/>
<polygon points="1162.5,5.0 1211.2,20.1 1198.2,62.1 1149.5,47.0" fill="none" stroke="#ea7a7e" stroke-width="0.9" stroke-dasharray="1.6 1.6"/>
<polygon points="1146.5,56.6 1195.3,71.7 1182.6,112.7 1133.8,97.6" fill="none" stroke="#ea7a7e" stroke-width="0.9" stroke-dasharray="1.6 1.6"/>
<polygon points="1130.9,107.2 1179.6,122.3 1165.4,168.1 1116.7,153.1" fill="none" stroke="#ea7a7e" stroke-width="0.9" stroke-dasharray="1.6 1.6"/>
<polygon points="1113.7,162.6 1162.4,177.7 1148.0,224.5 1099.2,209.4" fill="none" stroke="#ea7a7e" stroke-width="0.9" stroke-dasharray="1.6 1.6"/>
<polygon points="1096.3,219.0 1145.0,234.1 1130.2,281.8 1081.5,266.7" fill="none" stroke="#ea7a7e" stroke-width="0.9" stroke-dasharray="1.6 1.6"/>
<polygon points="1078.5,276.3 1127.3,291.4 1109.5,348.7 1060.8,333.6" fill="none" stroke="#ea7a7e" stroke-width="0.9" stroke-dasharray="1.6 1.6"/>
<polygon points="1057.8,343.2 1106.6,358.2 1087.3,420.3 1038.6,405.2" fill="none" stroke="#ea7a7e" stroke-width="0.9" stroke-dasharray="1.6 1.6"/>
<polygon points="1035.7,414.8 1084.4,429.9 1071.1,472.9 1022.3,457.8" fill="none" stroke="#ea7a7e" stroke-width="0.9" stroke-dasharray="1.6 1.6"/>
<polygon points="1019.4,467.3 1068.1,482.4 1053.6,529.2 1004.9,514.2" fill="none" stroke="#ea7a7e" stroke-width="0.9" stroke-dasharray="1.6 1.6"/>
<polygon points="1001.9,523.7 1050.7,538.8 1037.1,582.7 988.3,567.6" fill="none" stroke="#ea7a7e" stroke-width="0.9" stroke-dasharray="1.6 1.6"/>
<polygon points="985.4,577.2 1034.1,592.3 1017.8,644.8 969.1,629.7" fill="none" stroke="#ea7a7e" stroke-width="0.9" stroke-dasharray="1.6 1.6"/>
<polygon points="1255.1,-87.8 1300.9,-73.6 1286.2,-25.8 1240.3,-40.0" fill="none" stroke="#ea7a7e" stroke-width="0.9" stroke-dasharray="1.6 1.6"/>
<polygon points="1237.3,-30.5 1283.2,-16.3 1269.6,27.7 1223.7,13.5" fill="none" stroke="#ea7a7e" stroke-width="0.9" stroke-dasharray="1.6 1.6"/>
<polygon points="1220.8,23.0 1266.6,37.2 1253.6,79.3 1207.8,65.1" fill="none" stroke="#ea7a7e" stroke-width="0.9" stroke-dasharray="1.6 1.6"/>
<polygon points="1204.8,74.6 1250.7,88.8 1238.0,129.9 1192.1,115.7" fill="none" stroke="#ea7a7e" stroke-width="0.9" stroke-dasharray="1.6 1.6"/>
<polygon points="1189.1,125.2 1235.0,139.4 1220.8,185.3 1175.0,171.1" fill="none" stroke="#ea7a7e" stroke-width="0.9" stroke-dasharray="1.6 1.6"/>
<polygon points="1172.0,180.6 1217.8,194.8 1203.4,241.6 1157.5,227.5" fill="none" stroke="#ea7a7e" stroke-width="0.9" stroke-dasharray="1.6 1.6"/>
<polygon points="1154.5,237.0 1200.4,251.2 1185.6,299.0 1139.8,284.8" fill="none" stroke="#ea7a7e" stroke-width="0.9" stroke-dasharray="1.6 1.6"/>
<polygon points="1136.8,294.3 1182.7,308.5 1164.9,365.8 1119.1,351.6" fill="none" stroke="#ea7a7e" stroke-width="0.9" stroke-dasharray="1.6 1.6"/>
<polygon points="1116.1,361.2 1162.0,375.4 1142.7,437.5 1096.9,423.3" fill="none" stroke="#ea7a7e" stroke-width="0.9" stroke-dasharray="1.6 1.6"/>
<polygon points="1093.9,432.8 1139.8,447.0 1126.5,490.0 1080.6,475.8" fill="none" stroke="#ea7a7e" stroke-width="0.9" stroke-dasharray="1.6 1.6"/>
<polygon points="1077.7,485.4 1123.5,499.6 1109.0,546.4 1063.2,532.2" fill="none" stroke="#ea7a7e" stroke-width="0.9" stroke-dasharray="1.6 1.6"/>
<polygon points="1060.2,541.7 1106.1,555.9 1092.5,599.9 1046.6,585.7" fill="none" stroke="#ea7a7e" stroke-width="0.9" stroke-dasharray="1.6 1.6"/>
<polygon points="1043.7,595.2 1089.5,609.4 1073.2,662.0 1027.4,647.8" fill="none" stroke="#ea7a7e" stroke-width="0.9" stroke-dasharray="1.6 1.6"/>
<polygon points="1310.5,-70.6 1369.7,-52.3 1354.9,-4.5 1295.7,-22.9" fill="none" stroke="#ea7a7e" stroke-width="0.9" stroke-dasharray="1.6 1.6"/>
<polygon points="1292.8,-13.3 1352.0,5.0 1338.4,49.0 1279.1,30.6" fill="none" stroke="#ea7a7e" stroke-width="0.9" stroke-dasharray="1.6 1.6"/>
<polygon points="1276.2,40.2 1335.4,58.5 1322.4,100.5 1263.2,82.2" fill="none" stroke="#ea7a7e" stroke-width="0.9" stroke-dasharray="1.6 1.6"/>
<polygon points="1260.2,91.8 1319.5,110.1 1306.7,151.2 1247.5,132.8" fill="none" stroke="#ea7a7e" stroke-width="0.9" stroke-dasharray="1.6 1.6"/>
<polygon points="1244.6,142.4 1303.8,160.7 1289.6,206.6 1230.4,188.2" fill="none" stroke="#ea7a7e" stroke-width="0.9" stroke-dasharray="1.6 1.6"/>
<polygon points="1227.4,197.8 1286.6,216.1 1272.1,262.9 1212.9,244.6" fill="none" stroke="#ea7a7e" stroke-width="0.9" stroke-dasharray="1.6 1.6"/>
<polygon points="1149.3,450.0 1208.6,468.3 1195.3,511.3 1136.0,493.0" fill="none" stroke="#ea7a7e" stroke-width="0.9" stroke-dasharray="1.6 1.6"/>
<polygon points="1133.1,502.5 1192.3,520.9 1177.8,567.7 1118.6,549.3" fill="none" stroke="#ea7a7e" stroke-width="0.9" stroke-dasharray="1.6 1.6"/>
<polygon points="1115.6,558.9 1174.9,577.2 1161.2,621.2 1102.0,602.8" fill="none" stroke="#ea7a7e" stroke-width="0.9" stroke-dasharray="1.6 1.6"/>
<polygon points="1099.1,612.4 1158.3,630.7 1142.0,683.3 1082.8,664.9" fill="none" stroke="#ea7a7e" stroke-width="0.9" stroke-dasharray="1.6 1.6"/>
<polygon points="1379.3,-49.3 1439.5,-30.7 1424.7,17.0 1364.5,-1.6" fill="none" stroke="#ea7a7e" stroke-width="0.9" stroke-dasharray="1.6 1.6"/>
<polygon points="1361.5,8.0 1421.7,26.6 1408.1,70.5 1347.9,51.9" fill="none" stroke="#ea7a7e" stroke-width="0.9" stroke-dasharray="1.6 1.6"/>
<polygon points="1345.0,61.5 1405.2,80.1 1392.1,122.1 1332.0,103.5" fill="none" stroke="#ea7a7e" stroke-width="0.9" stroke-dasharray="1.6 1.6"/>
<polygon points="1329.0,113.1 1389.2,131.7 1376.5,172.8 1316.3,154.1" fill="none" stroke="#ea7a7e" stroke-width="0.9" stroke-dasharray="1.6 1.6"/>
<polygon points="1313.3,163.7 1373.5,182.3 1359.3,228.2 1299.1,209.5" fill="none" stroke="#ea7a7e" stroke-width="0.9" stroke-dasharray="1.6 1.6"/>
<polygon points="1296.2,219.1 1356.4,237.7 1341.9,284.5 1281.7,265.9" fill="none" stroke="#ea7a7e" stroke-width="0.9" stroke-dasharray="1.6 1.6"/>
<polygon points="1218.1,471.3 1278.3,489.9 1265.0,532.9 1204.8,514.3" fill="none" stroke="#ea7a7e" stroke-width="0.9" stroke-dasharray="1.6 1.6"/>
<polygon points="1201.9,523.8 1262.0,542.5 1247.5,589.3 1187.4,570.6" fill="none" stroke="#ea7a7e" stroke-width="0.9" stroke-dasharray="1.6 1.6"/>
<polygon points="1184.4,580.2 1244.6,598.8 1231.0,642.8 1170.8,624.1" fill="none" stroke="#ea7a7e" stroke-width="0.9" stroke-dasharray="1.6 1.6"/>
<polygon points="1167.8,633.7 1228.0,652.3 1211.8,704.8 1151.6,686.2" fill="none" stroke="#ea7a7e" stroke-width="0.9" stroke-dasharray="1.6 1.6"/>
<polygon points="1449.0,-27.8 1493.9,-13.9 1479.1,33.9 1434.2,20.0" fill="none" stroke="#ea7a7e" stroke-width="0.9" stroke-dasharray="1.6 1.6"/>
<polygon points="1431.3,29.6 1476.2,43.5 1462.6,87.4 1417.7,73.5" fill="none" stroke="#ea7a7e" stroke-width="0.9" stroke-dasharray="1.6 1.6"/>
<polygon points="1414.7,83.1 1459.6,97.0 1446.6,139.0 1401.7,125.1" fill="none" stroke="#ea7a7e" stroke-width="0.9" stroke-dasharray="1.6 1.6"/>
<polygon points="1398.7,134.6 1443.6,148.5 1430.9,189.6 1386.0,175.7" fill="none" stroke="#ea7a7e" stroke-width="0.9" stroke-dasharray="1.6 1.6"/>
<polygon points="1383.1,185.3 1428.0,199.2 1413.8,245.0 1368.9,231.1" fill="none" stroke="#ea7a7e" stroke-width="0.9" stroke-dasharray="1.6 1.6"/>
<polygon points="1365.9,240.7 1410.8,254.6 1396.3,301.4 1351.4,287.5" fill="none" stroke="#ea7a7e" stroke-width="0.9" stroke-dasharray="1.6 1.6"/>
<polygon points="1348.5,297.0 1393.4,310.9 1378.6,358.7 1333.7,344.8" fill="none" stroke="#ea7a7e" stroke-width="0.9" stroke-dasharray="1.6 1.6"/>
<polygon points="1330.7,354.4 1375.6,368.3 1357.9,425.6 1313.0,411.7" fill="none" stroke="#ea7a7e" stroke-width="0.9" stroke-dasharray="1.6 1.6"/>
<polygon points="1310.0,421.2 1354.9,435.1 1335.7,497.2 1290.8,483.3" fill="none" stroke="#ea7a7e" stroke-width="0.9" stroke-dasharray="1.6 1.6"/>
<polygon points="1287.8,492.9 1332.7,506.8 1319.4,549.8 1274.5,535.9" fill="none" stroke="#ea7a7e" stroke-width="0.9" stroke-dasharray="1.6 1.6"/>
<polygon points="1271.6,545.4 1316.5,559.3 1302.0,606.1 1257.1,592.2" fill="none" stroke="#ea7a7e" stroke-width="0.9" stroke-dasharray="1.6 1.6"/>
<polygon points="1254.1,601.8 1299.0,615.7 1285.4,659.6 1240.5,645.7" fill="none" stroke="#ea7a7e" stroke-width="0.9" stroke-dasharray="1.6 1.6"/>
<polygon points="1237.6,655.3 1282.5,669.2 1266.2,721.7 1221.3,707.8" fill="none" stroke="#ea7a7e" stroke-width="0.9" stroke-dasharray="1.6 1.6"/>
<polygon points="1503.5,-10.9 1551.2,3.9 1536.4,51.6 1488.7,36.9" fill="none" stroke="#ea7a7e" stroke-width="0.9" stroke-dasharray="1.6 1.6"/>
<polygon points="1485.7,46.4 1533.5,61.2 1519.9,105.1 1472.1,90.4" fill="none" stroke="#ea7a7e" stroke-width="0.9" stroke-dasharray="1.6 1.6"/>
<polygon points="1469.2,99.9 1516.9,114.7 1503.9,156.7 1456.1,141.9" fill="none" stroke="#ea7a7e" stroke-width="0.9" stroke-dasharray="1.6 1.6"/>
<polygon points="1453.2,151.5 1501.0,166.3 1488.2,207.4 1440.5,192.6" fill="none" stroke="#ea7a7e" stroke-width="0.9" stroke-dasharray="1.6 1.6"/>
<polygon points="1437.5,202.1 1485.3,216.9 1471.1,262.8 1423.3,248.0" fill="none" stroke="#ea7a7e" stroke-width="0.9" stroke-dasharray="1.6 1.6"/>
<polygon points="1420.4,257.5 1468.1,272.3 1453.6,319.1 1405.9,304.3" fill="none" stroke="#ea7a7e" stroke-width="0.9" stroke-dasharray="1.6 1.6"/>
<polygon points="1402.9,313.9 1450.7,328.7 1435.9,376.4 1388.1,361.7" fill="none" stroke="#ea7a7e" stroke-width="0.9" stroke-dasharray="1.6 1.6"/>
<polygon points="1385.2,371.2 1432.9,386.0 1415.2,443.3 1367.4,428.5" fill="none" stroke="#ea7a7e" stroke-width="0.9" stroke-dasharray="1.6 1.6"/>
<polygon points="1364.5,438.1 1412.2,452.9 1393.0,515.0 1345.3,500.2" fill="none" stroke="#ea7a7e" stroke-width="0.9" stroke-dasharray="1.6 1.6"/>
<polygon points="1342.3,509.7 1390.1,524.5 1376.8,567.5 1329.0,552.7" fill="none" stroke="#ea7a7e" stroke-width="0.9" stroke-dasharray="1.6 1.6"/>
<polygon points="1326.0,562.3 1373.8,577.1 1359.3,623.9 1311.5,609.1" fill="none" stroke="#ea7a7e" stroke-width="0.9" stroke-dasharray="1.6 1.6"/>
<polygon points="1308.6,618.6 1356.4,633.4 1342.8,677.4 1295.0,662.6" fill="none" stroke="#ea7a7e" stroke-width="0.9" stroke-dasharray="1.6 1.6"/>
<polygon points="1292.0,672.1 1339.8,686.9 1323.5,739.4 1275.8,724.7" fill="none" stroke="#ea7a7e" stroke-width="0.9" stroke-dasharray="1.6 1.6"/>
<polygon points="1560.8,6.8 1605.7,20.7 1590.9,68.5 1546.0,54.6" fill="none" stroke="#ea7a7e" stroke-width="0.9" stroke-dasharray="1.6 1.6"/>
<polygon points="1543.0,64.2 1587.9,78.1 1574.3,122.0 1529.4,108.1" fill="none" stroke="#ea7a7e" stroke-width="0.9" stroke-dasharray="1.6 1.6"/>
<polygon points="1526.5,117.7 1571.4,131.6 1558.4,173.6 1513.5,159.7" fill="none" stroke="#ea7a7e" stroke-width="0.9" stroke-dasharray="1.6 1.6"/>
<polygon points="1510.5,169.2 1555.4,183.1 1542.7,224.2 1497.8,210.3" fill="none" stroke="#ea7a7e" stroke-width="0.9" stroke-dasharray="1.6 1.6"/>
<polygon points="1494.8,219.9 1539.7,233.8 1525.5,279.6 1480.6,265.7" fill="none" stroke="#ea7a7e" stroke-width="0.9" stroke-dasharray="1.6 1.6"/>
<polygon points="1421.8,455.8 1466.7,469.7 1447.5,531.8 1402.6,517.9" fill="none" stroke="#ea7a7e" stroke-width="0.9" stroke-dasharray="1.6 1.6"/>
<polygon points="1399.6,527.5 1444.5,541.4 1431.2,584.4 1386.3,570.5" fill="none" stroke="#ea7a7e" stroke-width="0.9" stroke-dasharray="1.6 1.6"/>
<polygon points="1383.4,580.0 1428.3,593.9 1413.8,640.7 1368.9,626.8" fill="none" stroke="#ea7a7e" stroke-width="0.9" stroke-dasharray="1.6 1.6"/>
<polygon points="1365.9,636.4 1410.8,650.3 1397.2,694.2 1352.3,680.3" fill="none" stroke="#ea7a7e" stroke-width="0.9" stroke-dasharray="1.6 1.6"/>
<polygon points="1349.3,689.9 1394.2,703.8 1378.0,756.3 1333.1,742.4" fill="none" stroke="#ea7a7e" stroke-width="0.9" stroke-dasharray="1.6 1.6"/>
<polygon points="1615.2,23.7 1677.3,42.9 1662.5,90.7 1600.4,71.5" fill="none" stroke="#ea7a7e" stroke-width="0.9" stroke-dasharray="1.6 1.6"/>
<polygon points="1597.5,81.0 1659.6,100.2 1646.0,144.2 1583.9,125.0" fill="none" stroke="#ea7a7e" stroke-width="0.9" stroke-dasharray="1.6 1.6"/>
<polygon points="1580.9,134.5 1643.0,153.7 1630.0,195.8 1567.9,176.5" fill="none" stroke="#ea7a7e" stroke-width="0.9" stroke-dasharray="1.6 1.6"/>
<polygon points="1565.0,186.1 1627.1,205.3 1614.3,246.4 1552.2,227.2" fill="none" stroke="#ea7a7e" stroke-width="0.9" stroke-dasharray="1.6 1.6"/>
<polygon points="1549.3,236.7 1611.4,255.9 1597.2,301.8 1535.1,282.6" fill="none" stroke="#ea7a7e" stroke-width="0.9" stroke-dasharray="1.6 1.6"/>
<polygon points="1532.1,292.1 1594.2,311.4 1579.7,358.2 1517.6,338.9" fill="none" stroke="#ea7a7e" stroke-width="0.9" stroke-dasharray="1.6 1.6"/>
<polygon points="1514.7,348.5 1576.8,367.7 1562.0,415.5 1499.9,396.3" fill="none" stroke="#ea7a7e" stroke-width="0.9" stroke-dasharray="1.6 1.6"/>
<polygon points="1496.9,405.8 1559.0,425.0 1541.3,482.3 1479.2,463.1" fill="none" stroke="#ea7a7e" stroke-width="0.9" stroke-dasharray="1.6 1.6"/>
<polygon points="1476.2,472.7 1538.3,491.9 1519.1,554.0 1457.0,534.8" fill="none" stroke="#ea7a7e" stroke-width="0.9" stroke-dasharray="1.6 1.6"/>
<polygon points="1454.1,544.3 1516.2,563.5 1502.9,606.5 1440.8,587.3" fill="none" stroke="#ea7a7e" stroke-width="0.9" stroke-dasharray="1.6 1.6"/>
<polygon points="1437.8,596.9 1499.9,616.1 1485.4,662.9 1423.3,643.7" fill="none" stroke="#ea7a7e" stroke-width="0.9" stroke-dasharray="1.6 1.6"/>
<polygon points="1420.4,653.2 1482.5,672.4 1468.8,716.4 1406.8,697.2" fill="none" stroke="#ea7a7e" stroke-width="0.9" stroke-dasharray="1.6 1.6"/>
<polygon points="1403.8,706.7 1465.9,725.9 1449.6,778.5 1387.5,759.3" fill="none" stroke="#ea7a7e" stroke-width="0.9" stroke-dasharray="1.6 1.6"/>
<polygon points="1686.9,45.9 1753.7,66.6 1739.0,114.3 1672.1,93.6" fill="none" stroke="#ea7a7e" stroke-width="0.9" stroke-dasharray="1.6 1.6"/>
<polygon points="1669.1,103.2 1736.0,123.9 1722.4,167.8 1655.5,147.1" fill="none" stroke="#ea7a7e" stroke-width="0.9" stroke-dasharray="1.6 1.6"/>
<polygon points="1652.6,156.7 1719.4,177.4 1706.4,219.4 1639.6,198.7" fill="none" stroke="#ea7a7e" stroke-width="0.9" stroke-dasharray="1.6 1.6"/>
<polygon points="1636.6,208.3 1703.5,229.0 1690.8,270.0 1623.9,249.3" fill="none" stroke="#ea7a7e" stroke-width="0.9" stroke-dasharray="1.6 1.6"/>
<polygon points="1620.9,258.9 1687.8,279.6 1673.6,325.5 1606.7,304.8" fill="none" stroke="#ea7a7e" stroke-width="0.9" stroke-dasharray="1.6 1.6"/>
<polygon points="1603.8,314.3 1670.7,335.0 1656.2,381.8 1589.3,361.1" fill="none" stroke="#ea7a7e" stroke-width="0.9" stroke-dasharray="1.6 1.6"/>
<polygon points="1586.3,370.7 1653.2,391.4 1638.4,439.1 1571.5,418.4" fill="none" stroke="#ea7a7e" stroke-width="0.9" stroke-dasharray="1.6 1.6"/>
<polygon points="1568.6,428.0 1635.5,448.7 1617.7,506.0 1550.8,485.3" fill="none" stroke="#ea7a7e" stroke-width="0.9" stroke-dasharray="1.6 1.6"/>
<polygon points="1547.9,494.9 1614.8,515.6 1595.5,577.6 1528.7,556.9" fill="none" stroke="#ea7a7e" stroke-width="0.9" stroke-dasharray="1.6 1.6"/>
<polygon points="1525.7,566.5 1592.6,587.2 1579.3,630.2 1512.4,609.5" fill="none" stroke="#ea7a7e" stroke-width="0.9" stroke-dasharray="1.6 1.6"/>
<polygon points="1509.4,619.0 1576.3,639.7 1561.8,686.5 1495.0,665.8" fill="none" stroke="#ea7a7e" stroke-width="0.9" stroke-dasharray="1.6 1.6"/>
<polygon points="1492.0,675.4 1558.9,696.1 1545.3,740.0 1478.4,719.3" fill="none" stroke="#ea7a7e" stroke-width="0.9" stroke-dasharray="1.6 1.6"/>
<polygon points="1475.4,728.9 1542.3,749.6 1526.0,802.1 1459.2,781.4" fill="none" stroke="#ea7a7e" stroke-width="0.9" stroke-dasharray="1.6 1.6"/>
<line x1="1082.7" y1="-146.4" x2="852.1" y2="598.7" stroke="#fdfdfd" stroke-width="4"/>
<line x1="1138.1" y1="-129.2" x2="907.5" y2="615.9" stroke="#fdfdfd" stroke-width="4"/>
<line x1="1307.2" y1="-76.9" x2="1206.7" y2="247.9" stroke="#fdfdfd" stroke-width="4"/>
<line x1="1146.0" y1="443.7" x2="1076.5" y2="668.2" stroke="#fdfdfd" stroke-width="4"/>
<line x1="1376.0" y1="-55.6" x2="1292.9" y2="212.8" stroke="#fdfdfd" stroke-width="4"/>
<line x1="1285.2" y1="210.5" x2="1255.5" y2="299.7" stroke="#e6efe0" stroke-width="3"/>
<line x1="1445.7" y1="-34.0" x2="1395.4" y2="128.4" stroke="#fdfdfd" stroke-width="4"/>
<line x1="1340.8" y1="352.2" x2="1297.9" y2="490.8" stroke="#fdfdfd" stroke-width="4"/>
<line x1="1423.1" y1="137.0" x2="1390.3" y2="243.0" stroke="#fdfdfd" stroke-width="2"/>
<line x1="818.4" y1="399.9" x2="1601.7" y2="642.4" stroke="#fdfdfd" stroke-width="4"/>
<line x1="800.9" y1="456.2" x2="1584.2" y2="698.7" stroke="#fdfdfd" stroke-width="4"/>
<line x1="982.1" y1="570.9" x2="1567.7" y2="752.2" stroke="#fdfdfd" stroke-width="4"/>
<line x1="784.3" y1="509.7" x2="982.1" y2="570.9" stroke="#f6f9bf" stroke-width="8"/>
<line x1="961.5" y1="-62.5" x2="1523.2" y2="111.4" stroke="#fdfdfd" stroke-width="4"/>
<line x1="945.5" y1="-10.9" x2="1507.2" y2="163.0" stroke="#fdfdfd" stroke-width="4"/>
<line x1="929.8" y1="39.7" x2="1434.2" y2="195.9" stroke="#fdfdfd" stroke-width="4"/>
<line x1="895.2" y1="151.5" x2="1206.7" y2="247.9" stroke="#fdfdfd" stroke-width="4"/>
<line x1="1318.9" y1="287.9" x2="1455.5" y2="330.2" stroke="#fdfdfd" stroke-width="4"/>
<line x1="1180.9" y1="239.9" x2="1142.4" y2="364.1" stroke="#fdfdfd" stroke-width="4"/>
<line x1="877.5" y1="208.8" x2="1164.1" y2="297.5" stroke="#fdfdfd" stroke-width="4"/>
<line x1="1340.8" y1="352.2" x2="1439.2" y2="382.7" stroke="#fdfdfd" stroke-width="4"/>
<line x1="1193.5" y1="-112.1" x2="962.9" y2="633.0" stroke="#f8d3a0" stroke-width="5.5"/>
<line x1="1251.8" y1="-94.0" x2="1021.1" y2="651.1" stroke="#f8d3a0" stroke-width="5.5"/>
<line x1="1214.8" y1="465.0" x2="1145.3" y2="689.5" stroke="#f8d3a0" stroke-width="5.5"/>
<line x1="1032.4" y1="408.5" x2="1214.8" y2="465.0" stroke="#f8d3a0" stroke-width="5.5"/>
<line x1="1500.2" y1="-17.2" x2="1269.5" y2="728.0" stroke="#f6f9bf" stroke-width="8"/>
<line x1="1557.5" y1="0.6" x2="1326.8" y2="745.7" stroke="#f6f9bf" stroke-width="8"/>
<line x1="912.7" y1="95.1" x2="1696.0" y2="337.6" stroke="#f6f9bf" stroke-width="10"/>
<line x1="1540.6" y1="55.0" x2="1762.2" y2="123.6" stroke="#f6f9bf" stroke-width="8"/>
<line x1="856.8" y1="275.7" x2="1133.8" y2="361.4" stroke="#f6f9bf" stroke-width="10"/>
<line x1="1320.1" y1="419.1" x2="1640.1" y2="518.2" stroke="#f6f9bf" stroke-width="10"/>
<line x1="834.6" y1="347.3" x2="1032.4" y2="408.5" stroke="#f6f9bf" stroke-width="9"/>
<line x1="1214.8" y1="465.0" x2="1617.9" y2="589.8" stroke="#f6f9bf" stroke-width="9"/>
<polyline points="1133.8,361.4 1138.9,378.7 1123.7,421.1 1135.5,440.5" fill="none" stroke="#f6f9bf" stroke-width="7" stroke-linejoin="round"/>
<polyline points="1518,296.6 1524.6,331.8 1526.8,411 1522.4,468 1509,599" fill="none" stroke="#f6f9bf" stroke-width="7"/>
<path d="M1190.3,351.5 C1188,335 1195,318 1208.3,312.9 C1218,310 1225,318 1231.5,315.4 C1240,312 1245,303 1252.9,305.1 C1265,306 1272,318 1276,330 C1280,338 1292,336 1298.4,341.2 C1304,347 1306,354 1303.5,360 C1302,368 1300,372 1295.8,375.5 C1290,381 1282,380 1274.3,380.6 L1252.9,380.6 C1245,380 1238,377 1231.5,375.5 C1222,372 1212,368 1205.7,363.5 C1198,360 1192,357 1190.3,351.5 Z" fill="none" stroke="#ebebe6" stroke-width="4"/>
<path d="M1230,378 C1215,400 1205,430 1205,462 M1240,375 C1250,400 1240,430 1230,466 M1280,382 C1295,400 1300,420 1330,440 M1150,410 C1170,405 1180,395 1195,378" fill="none" stroke="#ebebe6" stroke-width="4"/>
<path d="M1160,380 C1190,420 1220,440 1250,470 M1340,360 C1300,390 1270,420 1240,468 M1260,400 L1315,460 M1200,395 L1300,470 M1150,430 C1180,420 1230,400 1270,395" fill="none" stroke="#ea7a7e" stroke-width="0.9" stroke-dasharray="1.6 1.6"/>
<polyline points="1153.9,373.5 1173.5,422.5 1188.2,447.1 1205.4,456.9" fill="none" stroke="#ea7a7e" stroke-width="0.9" stroke-dasharray="1.6 1.6"/>
<polyline points="1141.7,437.3 1185.8,437.3 1215.2,447.1" fill="none" stroke="#ea7a7e" stroke-width="0.9" stroke-dasharray="1.6 1.6"/>
<polyline points="1252.0,383.3 1271.6,417.6 1296.1,456.9 1308.3,486.3" fill="none" stroke="#ea7a7e" stroke-width="0.9" stroke-dasharray="1.6 1.6"/>
<polyline points="1227.5,461.8 1271.6,427.5 1320.6,417.6" fill="none" stroke="#ea7a7e" stroke-width="0.9" stroke-dasharray="1.6 1.6"/>
<polyline points="1222.5,459.3 1259.3,437.3 1310.8,427.5" fill="none" stroke="#ea7a7e" stroke-width="0.9" stroke-dasharray="1.6 1.6"/>
<polyline points="1247.1,447.1 1276.5,471.6 1305.9,486.3" fill="none" stroke="#ea7a7e" stroke-width="0.9" stroke-dasharray="1.6 1.6"/>
<polyline points="1193.1,380.9 1210.3,398.0 1247.1,402.9" fill="none" stroke="#ea7a7e" stroke-width="0.9" stroke-dasharray="1.6 1.6"/>
<polyline points="1303.4,380.9 1320.6,349.0 1335.3,336.8" fill="none" stroke="#ea7a7e" stroke-width="0.9" stroke-dasharray="1.6 1.6"/>
<polyline points="1303.4,349.0 1335.3,356.4" fill="none" stroke="#ea7a7e" stroke-width="0.9" stroke-dasharray="1.6 1.6"/>
<polyline points="1271.6,302.5 1320.6,309.8" fill="none" stroke="#ea7a7e" stroke-width="0.9" stroke-dasharray="1.6 1.6"/>
<polyline points="1149.0,356.4 1193.1,361.3" fill="none" stroke="#ea7a7e" stroke-width="0.9" stroke-dasharray="1.6 1.6"/>
<polyline points="1161.3,368.6 1180.9,407.8 1173.5,432.4" fill="none" stroke="#ea7a7e" stroke-width="0.9" stroke-dasharray="1.6 1.6"/>
<polyline points="1271.6,385.8 1286.3,361.3 1303.4,349.0" fill="none" stroke="#ea7a7e" stroke-width="0.9" stroke-dasharray="1.6 1.6"/>
<polyline points="1210.3,402.9 1217.6,437.3 1215.2,456.9" fill="none" stroke="#ea7a7e" stroke-width="0.9" stroke-dasharray="1.6 1.6"/>
<polyline points="1469.6,296.6 1478.4,331.8 1471.8,367.0 1447.6,384.6 1456.4,411.0 1430.0,437.4" fill="none" stroke="#ea7a7e" stroke-width="0.9" stroke-dasharray="1.6 1.6"/>
<polyline points="1487.2,323.0 1500.4,367.0 1496.0,433.0 1509.2,468.2" fill="none" stroke="#ea7a7e" stroke-width="0.9" stroke-dasharray="1.6 1.6"/>
<polyline points="1474.0,331.8 1513.6,340.6 1522.4,367.0" fill="none" stroke="#ea7a7e" stroke-width="0.9" stroke-dasharray="1.6 1.6"/>
<polyline points="1438.8,428.6 1474.0,446.2 1518.0,433.0" fill="none" stroke="#ea7a7e" stroke-width="0.9" stroke-dasharray="1.6 1.6"/>
<polyline points="1456.4,455.0 1487.2,476.9 1518.0,463.8" fill="none" stroke="#ea7a7e" stroke-width="0.9" stroke-dasharray="1.6 1.6"/>
<polyline points="1496.0,305.4 1504.8,340.6 1518.0,323.0" fill="none" stroke="#ea7a7e" stroke-width="0.9" stroke-dasharray="1.6 1.6"/>
<polyline points="1443.2,393.4 1465.2,375.8 1482.8,393.4 1496.0,375.8" fill="none" stroke="#ea7a7e" stroke-width="0.9" stroke-dasharray="1.6 1.6"/>
<polyline points="1054.6,533.0 1151.3,230.8 1204.7,247.3 1222.5,190.0 1293.2,211.9 1325.7,106.8 1395.4,128.4 1411.4,76.8 1468.7,94.5" fill="none" stroke="#f39a2a" stroke-width="5" stroke-linejoin="miter"/>
<rect x="1465.5" y="90" width="8" height="8" fill="#ee1c1c"/>
<rect x="1051" y="529" width="7.5" height="8" fill="#137313"/>
</svg>
  <div class="a" style="left:0;top:558px;width:591px;height:1px;background:#6a6a6a"></div>
  <div class="a" style="left:0;top:559px;width:591px;height:2px;background:#ffffff"></div>
</div>
</body></html>
